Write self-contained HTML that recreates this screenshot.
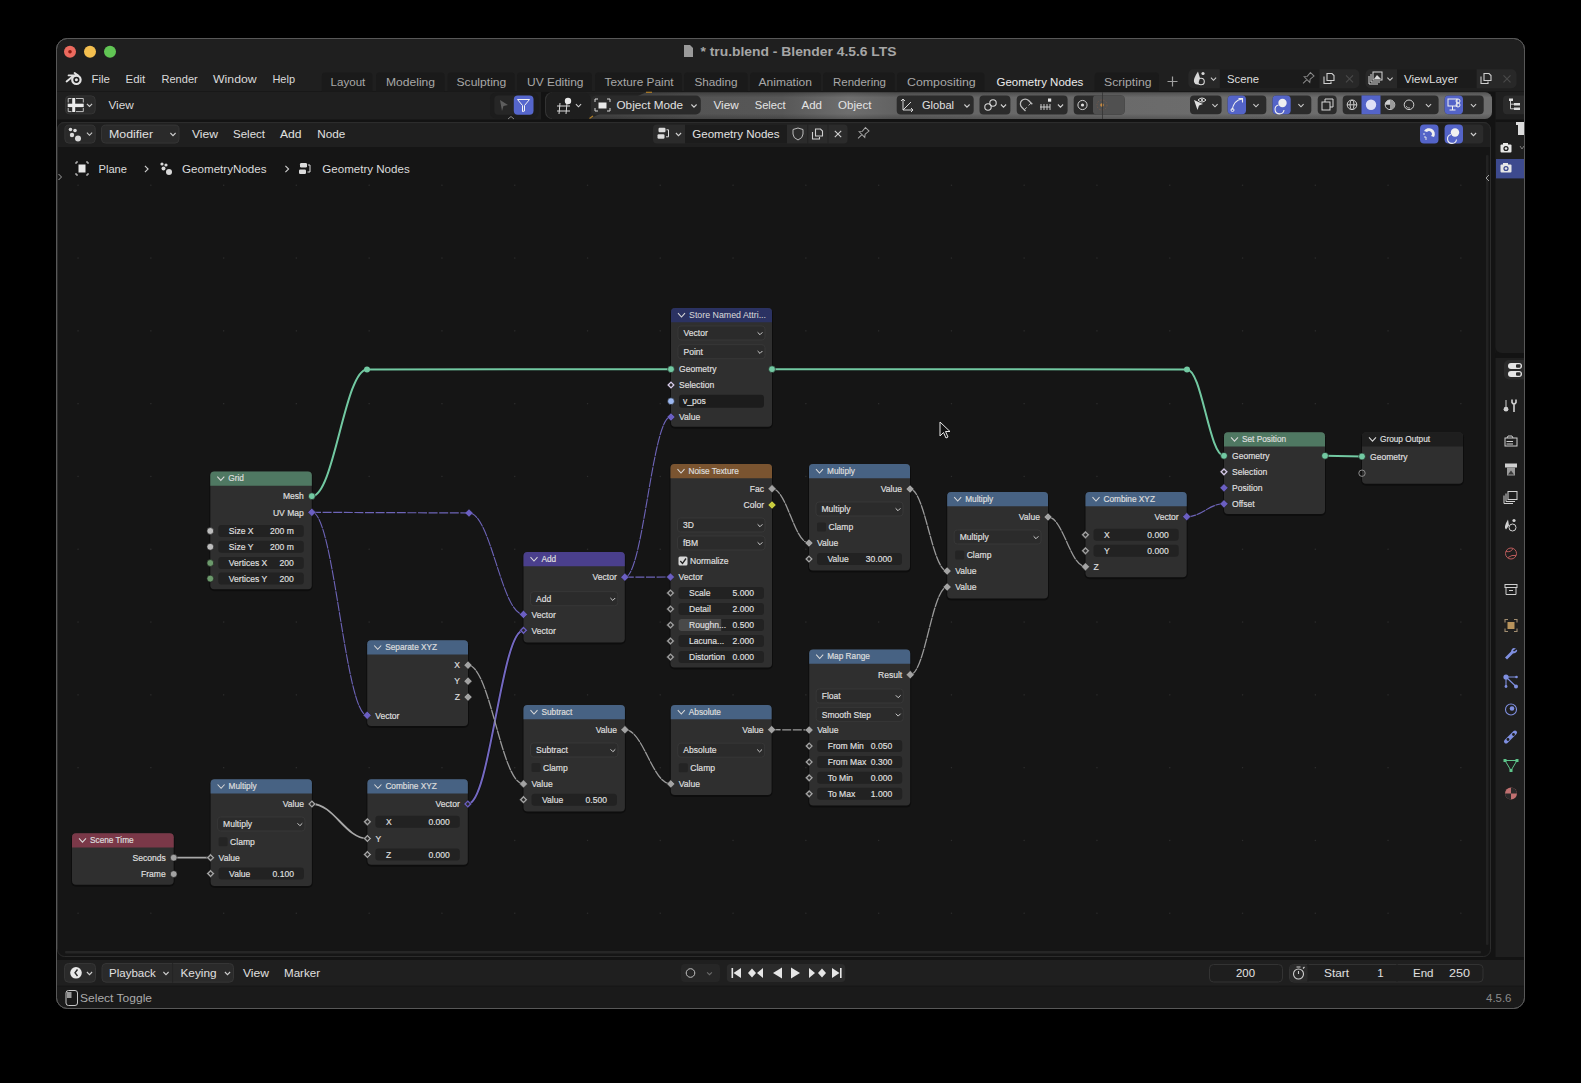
<!DOCTYPE html>
<html><head><meta charset="utf-8"><title>Blender</title>
<style>html,body{margin:0;padding:0;background:#000;width:1581px;height:1083px;overflow:hidden}
svg{display:block;font-family:"Liberation Sans", sans-serif}</style></head>
<body><svg width="1581" height="1083" viewBox="0 0 1581 1083">
<rect x="0" y="0" width="1581" height="1083" rx="0" fill="#000"/>
<rect x="56.5" y="38.5" width="1468" height="970" rx="11" fill="#131313" stroke="#585858" stroke-width="1"/>
<clipPath id="winclip"><rect x="57" y="39" width="1467" height="969" rx="10.5"/></clipPath><g clip-path="url(#winclip)">
<path d="M57 49 Q57 39 67 39 L1514 39 Q1524 39 1524 49 L1524 91.6 L57 91.6 Z" fill="#1f1f1f"/>
<circle cx="70" cy="51.8" r="6" fill="#ec6a5e"/>
<circle cx="90" cy="51.8" r="6" fill="#f4bf4f"/>
<circle cx="110" cy="51.8" r="6" fill="#61c554"/>
<circle cx="70" cy="51.8" r="1.8" fill="#8c1a10"/>
<path d="M684 45 L690 45 L693 48 L693 57 L684 57 Z" fill="#9a9a9a"/>
<text x="700.5" y="55.8" font-size="12.5" fill="#a6a6a6" font-weight="bold" textLength="196" lengthAdjust="spacingAndGlyphs">* tru.blend - Blender 4.5.6 LTS</text>
<g fill="none" stroke="#e2e2e2" stroke-linecap="round"><circle cx="76.4" cy="79.8" r="4.2" stroke-width="2.2"/><path d="M74.6 73 L78.2 75.6 M68.6 75.4 L76.5 75.2 M66.6 81.4 L72.6 76.4" stroke-width="1.9"/></g><circle cx="76.4" cy="79.8" r="1.5" fill="#e2e2e2"/>
<text x="91.4" y="83.4" font-size="11.8" fill="#dadada" textLength="18.6" lengthAdjust="spacingAndGlyphs">File</text>
<text x="125.6" y="83.4" font-size="11.8" fill="#dadada" textLength="19.7" lengthAdjust="spacingAndGlyphs">Edit</text>
<text x="161.5" y="83.4" font-size="11.8" fill="#dadada" textLength="36.2" lengthAdjust="spacingAndGlyphs">Render</text>
<text x="213.0" y="83.4" font-size="11.8" fill="#dadada" textLength="43.7" lengthAdjust="spacingAndGlyphs">Window</text>
<text x="272.4" y="83.4" font-size="11.8" fill="#dadada" textLength="22.6" lengthAdjust="spacingAndGlyphs">Help</text>
<path d="M321.8 91.6 L321.8 76 Q321.8 72.6 325.2 72.6 L369.1 72.6 Q372.5 72.6 372.5 76 L372.5 91.6 Z" fill="#1a1a1a"/>
<text x="330.6" y="86.4" font-size="11.5" fill="#a8a8a8" textLength="34.7" lengthAdjust="spacingAndGlyphs">Layout</text>
<path d="M376 91.6 L376 76 Q376 72.6 379.4 72.6 L441.20000000000005 72.6 Q444.6 72.6 444.6 76 L444.6 91.6 Z" fill="#1a1a1a"/>
<text x="386.0" y="86.4" font-size="11.5" fill="#a8a8a8" textLength="49" lengthAdjust="spacingAndGlyphs">Modeling</text>
<path d="M447.6 91.6 L447.6 76 Q447.6 72.6 451.0 72.6 L511.30000000000007 72.6 Q514.7 72.6 514.7 76 L514.7 91.6 Z" fill="#1a1a1a"/>
<text x="456.5" y="86.4" font-size="11.5" fill="#a8a8a8" textLength="49.8" lengthAdjust="spacingAndGlyphs">Sculpting</text>
<path d="M517 91.6 L517 76 Q517 72.6 520.4 72.6 L588.6 72.6 Q592 72.6 592 76 L592 91.6 Z" fill="#1a1a1a"/>
<text x="527.0" y="86.4" font-size="11.5" fill="#a8a8a8" textLength="56.5" lengthAdjust="spacingAndGlyphs">UV Editing</text>
<path d="M595 91.6 L595 76 Q595 72.6 598.4 72.6 L678.4 72.6 Q681.8 72.6 681.8 76 L681.8 91.6 Z" fill="#1a1a1a"/>
<text x="604.5" y="86.4" font-size="11.5" fill="#a8a8a8" textLength="69" lengthAdjust="spacingAndGlyphs">Texture Paint</text>
<path d="M684 91.6 L684 76 Q684 72.6 687.4 72.6 L744.2 72.6 Q747.6 72.6 747.6 76 L747.6 91.6 Z" fill="#1a1a1a"/>
<text x="694.4" y="86.4" font-size="11.5" fill="#a8a8a8" textLength="43.1" lengthAdjust="spacingAndGlyphs">Shading</text>
<path d="M750 91.6 L750 76 Q750 72.6 753.4 72.6 L817.6 72.6 Q821 72.6 821 76 L821 91.6 Z" fill="#1a1a1a"/>
<text x="758.5" y="86.4" font-size="11.5" fill="#a8a8a8" textLength="53.5" lengthAdjust="spacingAndGlyphs">Animation</text>
<path d="M823 91.6 L823 76 Q823 72.6 826.4 72.6 L891.3000000000001 72.6 Q894.7 72.6 894.7 76 L894.7 91.6 Z" fill="#1a1a1a"/>
<text x="833.0" y="86.4" font-size="11.5" fill="#a8a8a8" textLength="53" lengthAdjust="spacingAndGlyphs">Rendering</text>
<path d="M897 91.6 L897 76 Q897 72.6 900.4 72.6 L981.1 72.6 Q984.5 72.6 984.5 76 L984.5 91.6 Z" fill="#1a1a1a"/>
<text x="907.0" y="86.4" font-size="11.5" fill="#a8a8a8" textLength="68.7" lengthAdjust="spacingAndGlyphs">Compositing</text>
<text x="996.5" y="86.4" font-size="11.5" fill="#ececec" textLength="86.8" lengthAdjust="spacingAndGlyphs">Geometry Nodes</text>
<path d="M1094.7 91.6 L1094.7 76 Q1094.7 72.6 1098.1000000000001 72.6 L1155.6 72.6 Q1159 72.6 1159 76 L1159 91.6 Z" fill="#1a1a1a"/>
<text x="1104.0" y="86.4" font-size="11.5" fill="#a8a8a8" textLength="47.6" lengthAdjust="spacingAndGlyphs">Scripting</text>
<path d="M1167.5 81.5 L1177.5 81.5 M1172.5 76.5 L1172.5 86.5" stroke="#a0a0a0" stroke-width="1.2"/>
<rect x="1188.4" y="69.3" width="170.89999999999986" height="19.0" rx="5" fill="#282828"/>
<rect x="1219.8" y="69.3" width="99.70000000000005" height="19.0" rx="0" fill="#1b1b1b"/>
<text x="1227.0" y="82.9" font-size="11.5" fill="#dedede" textLength="32" lengthAdjust="spacingAndGlyphs">Scene</text>
<rect x="1365.5" y="69.3" width="151.0" height="19.0" rx="5" fill="#282828"/>
<rect x="1397" y="69.3" width="79.59999999999991" height="19.0" rx="0" fill="#1b1b1b"/>
<text x="1404.0" y="82.9" font-size="11.5" fill="#dedede" textLength="54" lengthAdjust="spacingAndGlyphs">ViewLayer</text>
<path d="M1198 71.5 Q1193 79 1194 82 Q1195 85 1198 84.5 L1200 78 Z" fill="#d8d8d8"/><circle cx="1201" cy="81.5" r="3.3" fill="none" stroke="#d8d8d8" stroke-width="1.1"/><circle cx="1203" cy="73.5" r="1.6" fill="#d8d8d8"/>
<path d="M1210.9 77.7 L1213.5 80.3 L1216.1 77.7" fill="none" stroke="#cfcfcf" stroke-width="1.1"/>
<g transform="translate(1308,78.5) rotate(45)" fill="none" stroke="#8a8a8a" stroke-width="1"><path d="M-2.5 -6 L2.5 -6 L2 -1 L4 1.5 L-4 1.5 L-2 -1 Z M0 1.5 L0 7"/></g>
<path d="M1324 76.5 L1324 83.5 L1331 83.5 L1331 81.5" fill="none" stroke="#cfcfcf" stroke-width="1.1"/><path d="M1327 73.5 L1332 73.5 L1334 75.5 L1334 80.5 L1327 80.5 Z" fill="none" stroke="#cfcfcf" stroke-width="1.1"/>
<path d="M1346.0 75.3 L1353.0 82.3 M1353.0 75.3 L1346.0 82.3" stroke="#4a4a4a" stroke-width="1.1"/>
<g fill="none" stroke="#d8d8d8" stroke-width="1"><rect x="1373" y="72" width="9" height="8"/><path d="M1371 74 L1371 82 L1380 82 M1369 76 L1369 84 L1378 84"/></g><path d="M1374 79 L1377 75 L1381 79 Z" fill="#d8d8d8"/>
<path d="M1387.4 77.7 L1390.0 80.3 L1392.6 77.7" fill="none" stroke="#cfcfcf" stroke-width="1.1"/>
<path d="M1481 76.5 L1481 83.5 L1488 83.5 L1488 81.5" fill="none" stroke="#cfcfcf" stroke-width="1.1"/><path d="M1484 73.5 L1489 73.5 L1491 75.5 L1491 80.5 L1484 80.5 Z" fill="none" stroke="#cfcfcf" stroke-width="1.1"/>
<path d="M1503.5 75.3 L1510.5 82.3 M1510.5 75.3 L1503.5 82.3" stroke="#4a4a4a" stroke-width="1.1"/>
<rect x="57" y="92" width="484" height="27.5" rx="0" fill="#1f1f1f"/>
<rect x="65.4" y="95.9" width="29.8" height="18" rx="4" fill="#2a2a2a" stroke="#353535" stroke-width="1"/>
<g fill="none" stroke="#d0d0d0" stroke-width="0.9"><path d="M68.2 102.5 L68.2 98.5 L71.5 98.5 M76 98.5 L83.3 98.5 L83.3 102.5 M68.2 108 L68.2 111.6 L71.5 111.6 M76 111.6 L83.3 111.6 L83.3 108"/></g><g fill="#ececec"><rect x="72.2" y="98" width="3" height="14"/><rect x="67.7" y="103.7" width="16" height="3.4"/></g>
<path d="M86.9 103.9 L89.5 106.5 L92.1 103.9" fill="none" stroke="#cfcfcf" stroke-width="1.1"/>
<text x="108.4" y="109.1" font-size="11.5" fill="#dadada" textLength="25.3" lengthAdjust="spacingAndGlyphs">View</text>
<rect x="490" y="92.6" width="48.60000000000002" height="25.80000000000001" rx="6" fill="#1c1c1c"/>
<rect x="494.3" y="95.6" width="39.19999999999999" height="19.200000000000003" rx="4" fill="#262626"/>
<path d="M500 100 L508 105 L503.5 106 L502 111 Z" fill="#5e5e5e"/>
<rect x="513.8" y="95.6" width="19.700000000000045" height="19.200000000000003" rx="4" fill="#5566cc"/>
<path d="M517.5 99.5 L529.5 99.5 L524.5 105.5 L524.5 111 L522.5 111.5 L522.5 105.5 Z" fill="none" stroke="#f4f4f4" stroke-width="1"/>
<path d="M508 119 L511 116.5 L514 119" fill="none" stroke="#8a8a8a" stroke-width="1"/>
<defs><linearGradient id="vpg" x1="0" y1="0" x2="1" y2="0"><stop offset="0" stop-color="#3a3a3a"/><stop offset="0.15" stop-color="#545454"/><stop offset="0.25" stop-color="#575757"/><stop offset="0.32" stop-color="#6e6e6e"/><stop offset="0.37" stop-color="#626262"/><stop offset="0.5" stop-color="#686868"/><stop offset="0.7" stop-color="#6c6c6c"/><stop offset="1" stop-color="#6e6e6e"/></linearGradient><linearGradient id="vpv" x1="0" y1="0" x2="0" y2="1"><stop offset="0" stop-color="#000" stop-opacity="0.25"/><stop offset="0.2" stop-color="#000" stop-opacity="0"/><stop offset="0.8" stop-color="#000" stop-opacity="0"/><stop offset="1" stop-color="#000" stop-opacity="0.2"/></linearGradient></defs>
<rect x="545.2" y="92.2" width="946.8" height="26.8" rx="7" fill="url(#vpg)"/>
<path d="M552 92.2 L646 92.2 L589 119 L552 119 Z" fill="#262626"/>
<path d="M646 92.4 L652 92.4 M589.5 118.6 L593 116" stroke="#c8902e" stroke-width="1.2"/>
<rect x="545.2" y="92.2" width="946.8" height="26.8" rx="7" fill="url(#vpv)"/>
<rect x="546" y="92.6" width="45" height="26.0" rx="7" fill="#1e1e1e"/>
<g stroke="#d8d8d8" stroke-width="1" fill="none"><path d="M557 106 L570 106 M557 111 L570 111 M560 103 L559 114 M567 103 L566 114"/></g><circle cx="568" cy="101" r="3.2" fill="#e8e8e8"/>
<path d="M575.9 104.2 L578.5 106.8 L581.1 104.2" fill="none" stroke="#cfcfcf" stroke-width="1.1"/>
<rect x="591" y="95.5" width="109.79999999999995" height="19.0" rx="5" fill="#2a2a2a"/>
<g fill="none" stroke="#d8d8d8" stroke-width="1"><path d="M595 99 L598 99 M595 99 L595 102 M607 99 L610 99 M610 99 L610 102 M595 111 L598 111 M595 111 L595 108 M607 111 L610 111 M610 111 L610 108"/></g><rect x="598.5" y="102.5" width="8" height="6" fill="#e8e8e8"/>
<text x="616.5" y="109.3" font-size="11.5" fill="#e0e0e0" textLength="66.5" lengthAdjust="spacingAndGlyphs">Object Mode</text>
<path d="M691.4 104.5 L694.0 107.1 L696.6 104.5" fill="none" stroke="#cfcfcf" stroke-width="1.1"/>
<text x="713.4" y="109.3" font-size="11.5" fill="#e4e4e4" textLength="25.3" lengthAdjust="spacingAndGlyphs">View</text>
<text x="754.7" y="109.3" font-size="11.5" fill="#e4e4e4" textLength="31" lengthAdjust="spacingAndGlyphs">Select</text>
<text x="801.5" y="109.3" font-size="11.5" fill="#e4e4e4" textLength="20.5" lengthAdjust="spacingAndGlyphs">Add</text>
<text x="838.0" y="109.3" font-size="11.5" fill="#e4e4e4" textLength="33.4" lengthAdjust="spacingAndGlyphs">Object</text>
<rect x="896.7" y="95.5" width="77.0" height="19.0" rx="4" fill="#2b2b2b"/>
<g fill="none" stroke="#d8d8d8" stroke-width="1"><path d="M903 99 L903 110 L913 110 M903 99 L901 101 M903 99 L905 101 M913 110 L911 108 M913 110 L911 112 M903 110 L911 102"/></g>
<text x="922.0" y="109.3" font-size="11.5" fill="#e0e0e0" textLength="32" lengthAdjust="spacingAndGlyphs">Global</text>
<path d="M964.4 104.5 L967.0 107.1 L969.6 104.5" fill="none" stroke="#cfcfcf" stroke-width="1.1"/>
<rect x="979.5" y="95.5" width="30.899999999999977" height="19.0" rx="4" fill="#2b2b2b"/>
<g fill="none" stroke="#d8d8d8" stroke-width="1.1"><circle cx="988" cy="107" r="3.2"/><circle cx="993" cy="103" r="3.2"/></g>
<path d="M1000.9 104.5 L1003.5 107.1 L1006.1 104.5" fill="none" stroke="#cfcfcf" stroke-width="1.1"/>
<rect x="1016.7" y="95.5" width="50.899999999999864" height="19.0" rx="4" fill="#2b2b2b"/>
<path d="M1025.5 111 L1021.8 107.3 A4.8 4.8 0 0 1 1028.6 100.5 L1032.3 104.2" fill="none" stroke="#bcbcbc" stroke-width="1.3"/><path d="M1024.3 109.8 L1026.8 107.3 M1031.1 103 L1028.6 105.5" stroke="#bcbcbc" stroke-width="1"/>
<g stroke="#d8d8d8" stroke-width="0.9"><path d="M1040 107 L1050 107 M1041 104 L1041 110 M1044 104 L1044 110 M1047 104 L1047 110 M1050 104 L1050 110"/></g><rect x="1048" y="98.5" width="3.2" height="3.2" fill="#e8e8e8"/>
<path d="M1057.9 104.5 L1060.5 107.1 L1063.1 104.5" fill="none" stroke="#cfcfcf" stroke-width="1.1"/>
<rect x="1073.7" y="95.5" width="50.899999999999864" height="19.0" rx="4" fill="#2b2b2b"/>
<circle cx="1082.5" cy="105" r="4.6" fill="none" stroke="#d0d0d0" stroke-width="1"/><circle cx="1082.5" cy="105" r="1.6" fill="#e0e0e0"/>
<rect x="1093" y="95.4" width="31.6" height="18.8" rx="3" fill="#505050"/>
<circle cx="1102" cy="105" r="5" fill="none" stroke="#7a5a4a" stroke-width="0.8" stroke-dasharray="1.5 1.5"/><circle cx="1102" cy="105" r="1.8" fill="#c98a40"/>
<path d="M1102.5 92 L1102.5 119" stroke="#333" stroke-width="0.8"/>
<rect x="1190" y="95.4" width="31.59999999999991" height="18.799999999999997" rx="4" fill="#2b2b2b"/>
<path d="M1194 100 L1203 104 L1199 105.5 L1197.5 110 Z" fill="#e0e0e0"/><path d="M1198 100 Q1202 96 1206 100 Q1202 104 1198 100 Z" fill="none" stroke="#e0e0e0" stroke-width="1"/><circle cx="1202" cy="100" r="1.1" fill="#e0e0e0"/>
<path d="M1212.4 104.2 L1215.0 106.8 L1217.6 104.2" fill="none" stroke="#cfcfcf" stroke-width="1.1"/>
<rect x="1227.6" y="95.4" width="38.700000000000045" height="18.799999999999997" rx="4" fill="#2b2b2b"/>
<rect x="1227.6" y="95.4" width="18.40000000000009" height="18.799999999999997" rx="4" fill="#5464c8"/>
<path d="M1232 110 Q1234 100 1242 99 M1238.5 98.5 L1242.5 98.5 L1242.5 102.5" fill="none" stroke="#f0f0f0" stroke-width="1.1"/><circle cx="1232.5" cy="110" r="1.5" fill="none" stroke="#f0f0f0" stroke-width="1"/>
<path d="M1253.4 104.2 L1256.0 106.8 L1258.6 104.2" fill="none" stroke="#cfcfcf" stroke-width="1.1"/>
<rect x="1272.5" y="95.4" width="38.799999999999955" height="18.799999999999997" rx="4" fill="#2b2b2b"/>
<rect x="1272.5" y="95.4" width="18.200000000000045" height="18.799999999999997" rx="4" fill="#5464c8"/>
<circle cx="1282.5" cy="103" r="4.2" fill="#f0f0f0"/><path d="M1278.5 105 A4.5 4.5 0 1 0 1284 110" fill="none" stroke="#f0f0f0" stroke-width="1.1"/>
<path d="M1298.4 104.2 L1301.0 106.8 L1303.6 104.2" fill="none" stroke="#cfcfcf" stroke-width="1.1"/>
<rect x="1317.7" y="95.4" width="19.0" height="18.799999999999997" rx="4" fill="#2b2b2b"/>
<g fill="none" stroke="#d8d8d8" stroke-width="1"><rect x="1322" y="102" width="8" height="8"/><path d="M1325 102 L1325 99 L1333 99 L1333 107 L1330 107"/></g>
<rect x="1342.7" y="95.4" width="95.89999999999986" height="18.799999999999997" rx="4" fill="#2b2b2b"/>
<g fill="none" stroke="#d0d0d0" stroke-width="1"><circle cx="1352" cy="104.8" r="4.8"/><ellipse cx="1352" cy="104.8" rx="2" ry="4.8"/><path d="M1347.2 104.8 L1356.8 104.8"/></g>
<rect x="1361.5" y="95.4" width="19" height="18.8" rx="0" fill="#5464c8"/>
<circle cx="1371" cy="104.8" r="5.2" fill="#dfe0f6"/>
<circle cx="1390" cy="104.8" r="4.8" fill="none" stroke="#d0d0d0" stroke-width="1"/><path d="M1390 100 A4.8 4.8 0 0 1 1390 109.6 Z" fill="#9a9a9a"/><path d="M1390 104.8 L1390 100 A4.8 4.8 0 0 0 1385.2 104.8 Z" fill="#d0d0d0"/>
<circle cx="1409" cy="104.8" r="4.8" fill="none" stroke="#d0d0d0" stroke-width="1"/><path d="M1406 106 A3.5 3.5 0 0 0 1410 108" fill="none" stroke="#d0d0d0" stroke-width="0.8"/>
<path d="M1425.9 104.2 L1428.5 106.8 L1431.1 104.2" fill="none" stroke="#cfcfcf" stroke-width="1.1"/>
<rect x="1444.6" y="95.4" width="39.100000000000136" height="18.799999999999997" rx="4" fill="#2b2b2b"/>
<rect x="1444.6" y="95.4" width="18.40000000000009" height="18.799999999999997" rx="4" fill="#5464c8"/>
<g fill="none" stroke="#f0f0f0" stroke-width="1"><rect x="1448" y="99" width="9" height="7"/><path d="M1452.5 106 L1452.5 110 M1449.5 110 L1455.5 110"/><circle cx="1458" cy="101" r="2"/><circle cx="1458" cy="105" r="2"/></g>
<path d="M1470.9 104.2 L1473.5 106.8 L1476.1 104.2" fill="none" stroke="#cfcfcf" stroke-width="1.1"/>
<rect x="1495.5" y="92" width="28.5" height="261" rx="0" fill="#1f1f1f"/>
<rect x="1503" y="95.4" width="27" height="18.799999999999997" rx="4" fill="#2b2b2b"/>
<g fill="#dcdcdc"><rect x="1509" y="98.5" width="4" height="2.5"/><rect x="1514" y="103" width="6" height="2.5"/><rect x="1514" y="107.5" width="6" height="2.5"/></g><path d="M1510.5 101 L1510.5 108.8 L1514 108.8 M1510.5 104.2 L1514 104.2" fill="none" stroke="#dcdcdc" stroke-width="0.9"/>
<rect x="1495.5" y="119.5" width="28.5" height="238.5" rx="0" fill="#131313"/>
<path d="M1495.5 122 L1524 122 L1524 353 L1502 353 Q1495.5 353 1495.5 346.5 Z" fill="#1e1e1e"/>
<rect x="1518" y="122" width="6" height="13" fill="#dcdcdc"/><rect x="1516" y="122" width="8" height="3" fill="#dcdcdc"/>
<rect x="1496" y="159" width="28" height="19.4" rx="0" fill="#3d4a8e"/>
<g><rect x="1500.5" y="144.5" width="11" height="8" rx="1" fill="#e6e6e6"/><rect x="1503" y="143.0" width="5" height="2" fill="#e6e6e6"/><circle cx="1506" cy="148.5" r="2.6" fill="#1a1a1a"/><circle cx="1506" cy="148.5" r="1.3" fill="#e6e6e6"/></g>
<g><rect x="1500.5" y="164.5" width="11" height="8" rx="1" fill="#e6e6e6"/><rect x="1503" y="163.0" width="5" height="2" fill="#e6e6e6"/><circle cx="1506" cy="168.5" r="2.6" fill="#3d4a8e"/><circle cx="1506" cy="168.5" r="1.3" fill="#e6e6e6"/></g>
<path d="M1520 146 L1522 149 L1524 146" stroke="#888" fill="none" stroke-width="0.9"/>
<clipPath id="nedclip"><rect x="57" y="122" width="1434" height="835" rx="7"/></clipPath>
<g clip-path="url(#nedclip)">
<rect x="57" y="122" width="1434" height="835" rx="0" fill="#151515"/>
<rect x="57" y="122" width="1434" height="25" rx="0" fill="#1f1f1f"/>
<path d="M57 122.6 L1491 122.6" stroke="#2a2a2a" stroke-width="1"/>
<g fill="#2c2c2c"><rect x="77.4" y="184.6" width="1.3" height="1.3"/><rect x="150.2" y="184.6" width="1.3" height="1.3"/><rect x="223.0" y="184.6" width="1.3" height="1.3"/><rect x="295.7" y="184.6" width="1.3" height="1.3"/><rect x="368.5" y="184.6" width="1.3" height="1.3"/><rect x="441.3" y="184.6" width="1.3" height="1.3"/><rect x="514.1" y="184.6" width="1.3" height="1.3"/><rect x="586.9" y="184.6" width="1.3" height="1.3"/><rect x="659.6" y="184.6" width="1.3" height="1.3"/><rect x="732.4" y="184.6" width="1.3" height="1.3"/><rect x="805.2" y="184.6" width="1.3" height="1.3"/><rect x="878.0" y="184.6" width="1.3" height="1.3"/><rect x="950.8" y="184.6" width="1.3" height="1.3"/><rect x="1023.5" y="184.6" width="1.3" height="1.3"/><rect x="1096.3" y="184.6" width="1.3" height="1.3"/><rect x="1169.1" y="184.6" width="1.3" height="1.3"/><rect x="1241.9" y="184.6" width="1.3" height="1.3"/><rect x="1314.7" y="184.6" width="1.3" height="1.3"/><rect x="1387.4" y="184.6" width="1.3" height="1.3"/><rect x="1460.2" y="184.6" width="1.3" height="1.3"/><rect x="77.4" y="257.4" width="1.3" height="1.3"/><rect x="150.2" y="257.4" width="1.3" height="1.3"/><rect x="223.0" y="257.4" width="1.3" height="1.3"/><rect x="295.7" y="257.4" width="1.3" height="1.3"/><rect x="368.5" y="257.4" width="1.3" height="1.3"/><rect x="441.3" y="257.4" width="1.3" height="1.3"/><rect x="514.1" y="257.4" width="1.3" height="1.3"/><rect x="586.9" y="257.4" width="1.3" height="1.3"/><rect x="659.6" y="257.4" width="1.3" height="1.3"/><rect x="732.4" y="257.4" width="1.3" height="1.3"/><rect x="805.2" y="257.4" width="1.3" height="1.3"/><rect x="878.0" y="257.4" width="1.3" height="1.3"/><rect x="950.8" y="257.4" width="1.3" height="1.3"/><rect x="1023.5" y="257.4" width="1.3" height="1.3"/><rect x="1096.3" y="257.4" width="1.3" height="1.3"/><rect x="1169.1" y="257.4" width="1.3" height="1.3"/><rect x="1241.9" y="257.4" width="1.3" height="1.3"/><rect x="1314.7" y="257.4" width="1.3" height="1.3"/><rect x="1387.4" y="257.4" width="1.3" height="1.3"/><rect x="1460.2" y="257.4" width="1.3" height="1.3"/><rect x="77.4" y="330.2" width="1.3" height="1.3"/><rect x="150.2" y="330.2" width="1.3" height="1.3"/><rect x="223.0" y="330.2" width="1.3" height="1.3"/><rect x="295.7" y="330.2" width="1.3" height="1.3"/><rect x="368.5" y="330.2" width="1.3" height="1.3"/><rect x="441.3" y="330.2" width="1.3" height="1.3"/><rect x="514.1" y="330.2" width="1.3" height="1.3"/><rect x="586.9" y="330.2" width="1.3" height="1.3"/><rect x="659.6" y="330.2" width="1.3" height="1.3"/><rect x="732.4" y="330.2" width="1.3" height="1.3"/><rect x="805.2" y="330.2" width="1.3" height="1.3"/><rect x="878.0" y="330.2" width="1.3" height="1.3"/><rect x="950.8" y="330.2" width="1.3" height="1.3"/><rect x="1023.5" y="330.2" width="1.3" height="1.3"/><rect x="1096.3" y="330.2" width="1.3" height="1.3"/><rect x="1169.1" y="330.2" width="1.3" height="1.3"/><rect x="1241.9" y="330.2" width="1.3" height="1.3"/><rect x="1314.7" y="330.2" width="1.3" height="1.3"/><rect x="1387.4" y="330.2" width="1.3" height="1.3"/><rect x="1460.2" y="330.2" width="1.3" height="1.3"/><rect x="77.4" y="403.0" width="1.3" height="1.3"/><rect x="150.2" y="403.0" width="1.3" height="1.3"/><rect x="223.0" y="403.0" width="1.3" height="1.3"/><rect x="295.7" y="403.0" width="1.3" height="1.3"/><rect x="368.5" y="403.0" width="1.3" height="1.3"/><rect x="441.3" y="403.0" width="1.3" height="1.3"/><rect x="514.1" y="403.0" width="1.3" height="1.3"/><rect x="586.9" y="403.0" width="1.3" height="1.3"/><rect x="659.6" y="403.0" width="1.3" height="1.3"/><rect x="732.4" y="403.0" width="1.3" height="1.3"/><rect x="805.2" y="403.0" width="1.3" height="1.3"/><rect x="878.0" y="403.0" width="1.3" height="1.3"/><rect x="950.8" y="403.0" width="1.3" height="1.3"/><rect x="1023.5" y="403.0" width="1.3" height="1.3"/><rect x="1096.3" y="403.0" width="1.3" height="1.3"/><rect x="1169.1" y="403.0" width="1.3" height="1.3"/><rect x="1241.9" y="403.0" width="1.3" height="1.3"/><rect x="1314.7" y="403.0" width="1.3" height="1.3"/><rect x="1387.4" y="403.0" width="1.3" height="1.3"/><rect x="1460.2" y="403.0" width="1.3" height="1.3"/><rect x="77.4" y="475.8" width="1.3" height="1.3"/><rect x="150.2" y="475.8" width="1.3" height="1.3"/><rect x="223.0" y="475.8" width="1.3" height="1.3"/><rect x="295.7" y="475.8" width="1.3" height="1.3"/><rect x="368.5" y="475.8" width="1.3" height="1.3"/><rect x="441.3" y="475.8" width="1.3" height="1.3"/><rect x="514.1" y="475.8" width="1.3" height="1.3"/><rect x="586.9" y="475.8" width="1.3" height="1.3"/><rect x="659.6" y="475.8" width="1.3" height="1.3"/><rect x="732.4" y="475.8" width="1.3" height="1.3"/><rect x="805.2" y="475.8" width="1.3" height="1.3"/><rect x="878.0" y="475.8" width="1.3" height="1.3"/><rect x="950.8" y="475.8" width="1.3" height="1.3"/><rect x="1023.5" y="475.8" width="1.3" height="1.3"/><rect x="1096.3" y="475.8" width="1.3" height="1.3"/><rect x="1169.1" y="475.8" width="1.3" height="1.3"/><rect x="1241.9" y="475.8" width="1.3" height="1.3"/><rect x="1314.7" y="475.8" width="1.3" height="1.3"/><rect x="1387.4" y="475.8" width="1.3" height="1.3"/><rect x="1460.2" y="475.8" width="1.3" height="1.3"/><rect x="77.4" y="548.6" width="1.3" height="1.3"/><rect x="150.2" y="548.6" width="1.3" height="1.3"/><rect x="223.0" y="548.6" width="1.3" height="1.3"/><rect x="295.7" y="548.6" width="1.3" height="1.3"/><rect x="368.5" y="548.6" width="1.3" height="1.3"/><rect x="441.3" y="548.6" width="1.3" height="1.3"/><rect x="514.1" y="548.6" width="1.3" height="1.3"/><rect x="586.9" y="548.6" width="1.3" height="1.3"/><rect x="659.6" y="548.6" width="1.3" height="1.3"/><rect x="732.4" y="548.6" width="1.3" height="1.3"/><rect x="805.2" y="548.6" width="1.3" height="1.3"/><rect x="878.0" y="548.6" width="1.3" height="1.3"/><rect x="950.8" y="548.6" width="1.3" height="1.3"/><rect x="1023.5" y="548.6" width="1.3" height="1.3"/><rect x="1096.3" y="548.6" width="1.3" height="1.3"/><rect x="1169.1" y="548.6" width="1.3" height="1.3"/><rect x="1241.9" y="548.6" width="1.3" height="1.3"/><rect x="1314.7" y="548.6" width="1.3" height="1.3"/><rect x="1387.4" y="548.6" width="1.3" height="1.3"/><rect x="1460.2" y="548.6" width="1.3" height="1.3"/><rect x="77.4" y="621.4" width="1.3" height="1.3"/><rect x="150.2" y="621.4" width="1.3" height="1.3"/><rect x="223.0" y="621.4" width="1.3" height="1.3"/><rect x="295.7" y="621.4" width="1.3" height="1.3"/><rect x="368.5" y="621.4" width="1.3" height="1.3"/><rect x="441.3" y="621.4" width="1.3" height="1.3"/><rect x="514.1" y="621.4" width="1.3" height="1.3"/><rect x="586.9" y="621.4" width="1.3" height="1.3"/><rect x="659.6" y="621.4" width="1.3" height="1.3"/><rect x="732.4" y="621.4" width="1.3" height="1.3"/><rect x="805.2" y="621.4" width="1.3" height="1.3"/><rect x="878.0" y="621.4" width="1.3" height="1.3"/><rect x="950.8" y="621.4" width="1.3" height="1.3"/><rect x="1023.5" y="621.4" width="1.3" height="1.3"/><rect x="1096.3" y="621.4" width="1.3" height="1.3"/><rect x="1169.1" y="621.4" width="1.3" height="1.3"/><rect x="1241.9" y="621.4" width="1.3" height="1.3"/><rect x="1314.7" y="621.4" width="1.3" height="1.3"/><rect x="1387.4" y="621.4" width="1.3" height="1.3"/><rect x="1460.2" y="621.4" width="1.3" height="1.3"/><rect x="77.4" y="694.2" width="1.3" height="1.3"/><rect x="150.2" y="694.2" width="1.3" height="1.3"/><rect x="223.0" y="694.2" width="1.3" height="1.3"/><rect x="295.7" y="694.2" width="1.3" height="1.3"/><rect x="368.5" y="694.2" width="1.3" height="1.3"/><rect x="441.3" y="694.2" width="1.3" height="1.3"/><rect x="514.1" y="694.2" width="1.3" height="1.3"/><rect x="586.9" y="694.2" width="1.3" height="1.3"/><rect x="659.6" y="694.2" width="1.3" height="1.3"/><rect x="732.4" y="694.2" width="1.3" height="1.3"/><rect x="805.2" y="694.2" width="1.3" height="1.3"/><rect x="878.0" y="694.2" width="1.3" height="1.3"/><rect x="950.8" y="694.2" width="1.3" height="1.3"/><rect x="1023.5" y="694.2" width="1.3" height="1.3"/><rect x="1096.3" y="694.2" width="1.3" height="1.3"/><rect x="1169.1" y="694.2" width="1.3" height="1.3"/><rect x="1241.9" y="694.2" width="1.3" height="1.3"/><rect x="1314.7" y="694.2" width="1.3" height="1.3"/><rect x="1387.4" y="694.2" width="1.3" height="1.3"/><rect x="1460.2" y="694.2" width="1.3" height="1.3"/><rect x="77.4" y="767.0" width="1.3" height="1.3"/><rect x="150.2" y="767.0" width="1.3" height="1.3"/><rect x="223.0" y="767.0" width="1.3" height="1.3"/><rect x="295.7" y="767.0" width="1.3" height="1.3"/><rect x="368.5" y="767.0" width="1.3" height="1.3"/><rect x="441.3" y="767.0" width="1.3" height="1.3"/><rect x="514.1" y="767.0" width="1.3" height="1.3"/><rect x="586.9" y="767.0" width="1.3" height="1.3"/><rect x="659.6" y="767.0" width="1.3" height="1.3"/><rect x="732.4" y="767.0" width="1.3" height="1.3"/><rect x="805.2" y="767.0" width="1.3" height="1.3"/><rect x="878.0" y="767.0" width="1.3" height="1.3"/><rect x="950.8" y="767.0" width="1.3" height="1.3"/><rect x="1023.5" y="767.0" width="1.3" height="1.3"/><rect x="1096.3" y="767.0" width="1.3" height="1.3"/><rect x="1169.1" y="767.0" width="1.3" height="1.3"/><rect x="1241.9" y="767.0" width="1.3" height="1.3"/><rect x="1314.7" y="767.0" width="1.3" height="1.3"/><rect x="1387.4" y="767.0" width="1.3" height="1.3"/><rect x="1460.2" y="767.0" width="1.3" height="1.3"/><rect x="77.4" y="839.8" width="1.3" height="1.3"/><rect x="150.2" y="839.8" width="1.3" height="1.3"/><rect x="223.0" y="839.8" width="1.3" height="1.3"/><rect x="295.7" y="839.8" width="1.3" height="1.3"/><rect x="368.5" y="839.8" width="1.3" height="1.3"/><rect x="441.3" y="839.8" width="1.3" height="1.3"/><rect x="514.1" y="839.8" width="1.3" height="1.3"/><rect x="586.9" y="839.8" width="1.3" height="1.3"/><rect x="659.6" y="839.8" width="1.3" height="1.3"/><rect x="732.4" y="839.8" width="1.3" height="1.3"/><rect x="805.2" y="839.8" width="1.3" height="1.3"/><rect x="878.0" y="839.8" width="1.3" height="1.3"/><rect x="950.8" y="839.8" width="1.3" height="1.3"/><rect x="1023.5" y="839.8" width="1.3" height="1.3"/><rect x="1096.3" y="839.8" width="1.3" height="1.3"/><rect x="1169.1" y="839.8" width="1.3" height="1.3"/><rect x="1241.9" y="839.8" width="1.3" height="1.3"/><rect x="1314.7" y="839.8" width="1.3" height="1.3"/><rect x="1387.4" y="839.8" width="1.3" height="1.3"/><rect x="1460.2" y="839.8" width="1.3" height="1.3"/><rect x="77.4" y="912.6" width="1.3" height="1.3"/><rect x="150.2" y="912.6" width="1.3" height="1.3"/><rect x="223.0" y="912.6" width="1.3" height="1.3"/><rect x="295.7" y="912.6" width="1.3" height="1.3"/><rect x="368.5" y="912.6" width="1.3" height="1.3"/><rect x="441.3" y="912.6" width="1.3" height="1.3"/><rect x="514.1" y="912.6" width="1.3" height="1.3"/><rect x="586.9" y="912.6" width="1.3" height="1.3"/><rect x="659.6" y="912.6" width="1.3" height="1.3"/><rect x="732.4" y="912.6" width="1.3" height="1.3"/><rect x="805.2" y="912.6" width="1.3" height="1.3"/><rect x="878.0" y="912.6" width="1.3" height="1.3"/><rect x="950.8" y="912.6" width="1.3" height="1.3"/><rect x="1023.5" y="912.6" width="1.3" height="1.3"/><rect x="1096.3" y="912.6" width="1.3" height="1.3"/><rect x="1169.1" y="912.6" width="1.3" height="1.3"/><rect x="1241.9" y="912.6" width="1.3" height="1.3"/><rect x="1314.7" y="912.6" width="1.3" height="1.3"/><rect x="1387.4" y="912.6" width="1.3" height="1.3"/><rect x="1460.2" y="912.6" width="1.3" height="1.3"/></g>
<rect x="65" y="951" width="1416" height="2.5" rx="1" fill="#262626"/>
<rect x="1486" y="155" width="2.5" height="790" rx="1" fill="#222222"/>
</g>
<rect x="57.5" y="122.5" width="1433" height="834" rx="7" fill="none" stroke="#2c2c2c" stroke-width="1"/>
<rect x="64.9" y="125.1" width="30.3" height="18" rx="4" fill="#2a2a2a" stroke="#353535" stroke-width="1"/>
<g fill="#d8d8d8"><circle cx="70.5" cy="129.5" r="1.8"/><circle cx="75" cy="130.5" r="1.8"/><circle cx="72" cy="135" r="2.2"/><circle cx="78" cy="138.5" r="3"/></g>
<path d="M86.9 132.7 L89.5 135.3 L92.1 132.7" fill="none" stroke="#cfcfcf" stroke-width="1.1"/>
<rect x="101.5" y="125.1" width="77.5" height="18" rx="4" fill="#2a2a2a" stroke="#353535" stroke-width="1"/>
<text x="109.0" y="137.7" font-size="11.5" fill="#e0e0e0" textLength="44" lengthAdjust="spacingAndGlyphs">Modifier</text>
<path d="M170.4 133.0 L173.0 135.6 L175.6 133.0" fill="none" stroke="#cfcfcf" stroke-width="1.1"/>
<text x="192.0" y="137.7" font-size="11.5" fill="#e0e0e0" textLength="26" lengthAdjust="spacingAndGlyphs">View</text>
<text x="233.0" y="137.7" font-size="11.5" fill="#e0e0e0" textLength="32" lengthAdjust="spacingAndGlyphs">Select</text>
<text x="280.0" y="137.7" font-size="11.5" fill="#e0e0e0" textLength="21.6" lengthAdjust="spacingAndGlyphs">Add</text>
<text x="317.3" y="137.7" font-size="11.5" fill="#e0e0e0" textLength="28" lengthAdjust="spacingAndGlyphs">Node</text>
<rect x="653" y="124.6" width="194.60000000000002" height="18.900000000000006" rx="4" fill="#2b2b2b"/>
<rect x="685" y="124.6" width="102" height="18.9" rx="0" fill="#1c1c1c"/>
<g fill="#dcdcdc"><rect x="658.5" y="127.80000000000001" width="7" height="4.5" rx="1.2"/><rect x="657.5" y="134.3" width="7" height="4.5" rx="1.2"/></g><path d="M666.5 129.8 L668.5 129.8 L668.5 136.8 L666.0 136.8" fill="none" stroke="#dcdcdc" stroke-width="1"/>
<path d="M675.9 133.0 L678.5 135.6 L681.1 133.0" fill="none" stroke="#cfcfcf" stroke-width="1.1"/>
<text x="692.3" y="137.9" font-size="11.5" fill="#e2e2e2" textLength="87.2" lengthAdjust="spacingAndGlyphs">Geometry Nodes</text>
<path d="M793 129.5 L798 128 L803 129.5 L803 134 Q803 138 798 140 Q793 138 793 134 Z" fill="none" stroke="#bcbcbc" stroke-width="1"/>
<path d="M807.8 124.6 L807.8 143.5 M828 124.6 L828 143.5" stroke="#222" stroke-width="1"/>
<path d="M812.5 132 L812.5 139 L819.5 139 L819.5 137" fill="none" stroke="#cfcfcf" stroke-width="1.1"/><path d="M815.5 129 L820.5 129 L822.5 131 L822.5 136 L815.5 136 Z" fill="none" stroke="#cfcfcf" stroke-width="1.1"/>
<path d="M834.8 130.8 L841.2 137.2 M841.2 130.8 L834.8 137.2" stroke="#d0d0d0" stroke-width="1.1"/>
<g transform="translate(863,133.5) rotate(45)" fill="none" stroke="#a8a8a8" stroke-width="1"><path d="M-2.5 -6 L2.5 -6 L2 -1 L4 1.5 L-4 1.5 L-2 -1 Z M0 1.5 L0 7"/></g>
<rect x="1420" y="124.6" width="18.5" height="18.900000000000006" rx="4" fill="#5464c8"/>
<path d="M1424 131 A5.5 5.5 0 1 1 1434 137 L1431 136 A2.5 2.5 0 1 0 1427 132 Z" fill="#f0f0f0"/><path d="M1424 137 L1426 137 L1426 140 M1423 134 L1425 134" stroke="#f0f0f0" stroke-width="0.9" fill="none"/>
<rect x="1444.6" y="124.6" width="38.700000000000045" height="18.900000000000006" rx="4" fill="#2b2b2b"/>
<rect x="1444.6" y="124.6" width="18.40000000000009" height="18.900000000000006" rx="4" fill="#5464c8"/>
<circle cx="1455" cy="132.5" r="4.2" fill="#f0f0f0"/><path d="M1451 134.5 A4.5 4.5 0 1 0 1456.5 139.5" fill="none" stroke="#f0f0f0" stroke-width="1.1"/>
<path d="M1470.9 133.0 L1473.5 135.6 L1476.1 133.0" fill="none" stroke="#cfcfcf" stroke-width="1.1"/>
<g fill="none" stroke="#d8d8d8" stroke-width="1"><path d="M76 164 L76 162 L78 162 M86 162 L88 162 L88 164 M76 173 L76 175 L78 175 M86 175 L88 175 L88 173"/></g><rect x="78.5" y="164.5" width="7" height="8" fill="#e8e8e8"/>
<text x="98.5" y="173.1" font-size="11.5" fill="#dcdcdc" textLength="28.5" lengthAdjust="spacingAndGlyphs">Plane</text>
<g fill="#d8d8d8"><circle cx="162" cy="164" r="1.6"/><circle cx="166" cy="165" r="1.6"/><circle cx="163.5" cy="168.5" r="2"/><circle cx="169" cy="172" r="3"/></g>
<text x="182.0" y="173.1" font-size="11.5" fill="#dcdcdc" textLength="84.6" lengthAdjust="spacingAndGlyphs">GeometryNodes</text>
<g fill="#dcdcdc"><rect x="300" y="163" width="7" height="4.5" rx="1.2"/><rect x="299" y="169.5" width="7" height="4.5" rx="1.2"/></g><path d="M308 165 L310 165 L310 172 L307.5 172" fill="none" stroke="#dcdcdc" stroke-width="1"/>
<text x="322.3" y="173.1" font-size="11.5" fill="#dcdcdc" textLength="87.4" lengthAdjust="spacingAndGlyphs">Geometry Nodes</text>
<path d="M58.5 174 L61.5 177 L58.5 180" fill="none" stroke="#a0a0a0" stroke-width="1"/>
<path d="M1489 175 L1486 178 L1489 181" fill="none" stroke="#a0a0a0" stroke-width="1"/>
<path d="M144.9 165.8 L148.1 169.0 L144.9 172.2" fill="none" stroke="#cfcfcf" stroke-width="1.1"/>
<path d="M285.4 165.8 L288.6 169.0 L285.4 172.2" fill="none" stroke="#cfcfcf" stroke-width="1.1"/>
<g clip-path="url(#nedclip)">
<path d="M312 496.2 C334.0 496.2 345.0 369.4 367 369.4" fill="none" stroke="#72c9a2" stroke-width="2.0" stroke-linecap="round"/>
<path d="M367 369.4 L671 369.2" stroke="#72c9a2" stroke-width="2"/>
<path d="M772 369.2 L1187 369.4" stroke="#72c9a2" stroke-width="2"/>
<path d="M1187 369.4 C1201.8 369.4 1209.2 455.8 1224 455.8" fill="none" stroke="#72c9a2" stroke-width="2.0" stroke-linecap="round"/>
<path d="M1325 455.8 L1362 456.5" stroke="#72c9a2" stroke-width="2"/>
<path d="M312 512.3 L469 513" stroke="#6d64b8" stroke-width="1.2" stroke-dasharray="9 1.6"/>
<path d="M469 513 C490.8 513 501.7 614.4 523.5 614.4" fill="none" stroke="#6d64b8" stroke-width="1.1" stroke-dasharray="9 1.6" stroke-linecap="round"/>
<path d="M312 512.3 C334.08 512.3 345.12 715.3 367.2 715.3" fill="none" stroke="#6d64b8" stroke-width="1.1" stroke-dasharray="9 1.6" stroke-linecap="round"/>
<path d="M624.8 577.2 L670.5 577" stroke="#6d64b8" stroke-width="1.2" stroke-dasharray="9 1.6"/>
<path d="M624.8 577.2 C643.0799999999999 577.2 652.22 417 670.5 417" fill="none" stroke="#6d64b8" stroke-width="1.1" stroke-dasharray="9 1.6" stroke-linecap="round"/>
<path d="M467.8 804 C490.08 804 501.22 630.3 523.5 630.3" fill="none" stroke="#0c0c0c" stroke-width="3.2" stroke-linecap="round"/>
<path d="M467.8 804 C490.08 804 501.22 630.3 523.5 630.3" fill="none" stroke="#7469c2" stroke-width="2.0" stroke-linecap="round"/>
<path d="M1186.7 516.7 C1201.6200000000001 516.7 1209.08 503.8 1224 503.8" fill="none" stroke="#6d64b8" stroke-width="1.1" stroke-dasharray="9 1.6" stroke-linecap="round"/>
<path d="M468 665.2 C490.2 665.2 501.3 783.9 523.5 783.9" fill="none" stroke="#9a9a9a" stroke-width="1.3" stroke-dasharray="9 1.6" stroke-linecap="round"/>
<path d="M624.9 729.7 C643.26 729.7 652.4399999999999 783.9 670.8 783.9" fill="none" stroke="#9a9a9a" stroke-width="1.3" stroke-dasharray="9 1.6" stroke-linecap="round"/>
<path d="M771.6 729.7 L809.2 730" stroke="#9a9a9a" stroke-width="1.3" stroke-dasharray="9 1.6"/>
<path d="M772 488.7 C786.8 488.7 794.2 543 809 543" fill="none" stroke="#9a9a9a" stroke-width="1.3" stroke-dasharray="9 1.6" stroke-linecap="round"/>
<path d="M910 489 C924.88 489 932.32 571 947.2 571" fill="none" stroke="#9a9a9a" stroke-width="1.3" stroke-dasharray="9 1.6" stroke-linecap="round"/>
<path d="M910.2 674.7 C925.0 674.7 932.4000000000001 587 947.2 587" fill="none" stroke="#9a9a9a" stroke-width="1.3" stroke-dasharray="9 1.6" stroke-linecap="round"/>
<path d="M1048 517 C1063.0 517 1070.5 566.8 1085.5 566.8" fill="none" stroke="#9a9a9a" stroke-width="1.3" stroke-dasharray="9 1.6" stroke-linecap="round"/>
<path d="M173.7 857.7 L210.6 857.7" stroke="#a8a8a8" stroke-width="1.8"/>
<path d="M311.9 804 C334.09999999999997 804 345.2 838.5 367.4 838.5" fill="none" stroke="#a8a8a8" stroke-width="1.8" stroke-linecap="round"/>
<circle cx="367" cy="369.4" r="3" fill="#72c9a2"/><circle cx="1187" cy="369.4" r="3" fill="#72c9a2"/>
<path d="M469 509.2 L472.8 513 L469 516.8 L465.2 513 Z" fill="#6b5fc2"/>
<rect x="670" y="308" width="103" height="120.69999999999999" rx="5" fill="#000" opacity="0.35"/>
<rect x="671" y="308" width="101" height="118.69999999999999" rx="4" fill="#2f2f2f"/>
<path d="M671 322.3 L671 312 Q671 308 675 308 L768 308 Q772 308 772 312 L772 322.3 Z" fill="#2b3262"/>
<path d="M678.0 313.2 L681.5 317.0 L685.0 313.2" fill="none" stroke="#d8d8d8" stroke-width="1.05"/>
<text x="689.0" y="317.5" font-size="8.9" fill="#dcdcdc" textLength="77" lengthAdjust="spacingAndGlyphs">Store Named Attri...</text>
<rect x="678" y="326" width="87" height="14" rx="3" fill="#2b2b2b" stroke="#3a3a3a" stroke-width="0.8"/>
<text transform="translate(683.5,336.2) scale(0.93,1)" font-size="9.2" fill="#dedede" stroke="#dedede" stroke-width="0.22">Vector</text>
<path d="M757.6 332.3 L760.0 334.7 L762.4 332.3" fill="none" stroke="#cfcfcf" stroke-width="1.0"/>
<rect x="678" y="344.7" width="87" height="14" rx="3" fill="#2b2b2b" stroke="#3a3a3a" stroke-width="0.8"/>
<text transform="translate(683.5,354.9) scale(0.93,1)" font-size="9.2" fill="#dedede" stroke="#dedede" stroke-width="0.22">Point</text>
<path d="M757.6 351.0 L760.0 353.4 L762.4 351.0" fill="none" stroke="#cfcfcf" stroke-width="1.0"/>
<text transform="translate(679.0,372.4) scale(0.93,1)" font-size="9.2" fill="#dedede" stroke="#dedede" stroke-width="0.22">Geometry</text>
<circle cx="671" cy="369.2" r="3.4" fill="#72c9a2" stroke="#181818" stroke-width="0.6"/>
<circle cx="772" cy="369.2" r="3.4" fill="#72c9a2" stroke="#181818" stroke-width="0.6"/>
<text transform="translate(679.0,388.2) scale(0.93,1)" font-size="9.2" fill="#dedede" stroke="#dedede" stroke-width="0.22">Selection</text>
<path d="M671 380.9 L675.1 385 L671 389.1 L666.9 385 Z" fill="#d4c8e6" stroke="#181818" stroke-width="0.5"/><path d="M671 383.1 L672.9 385 L671 386.9 L669.1 385 Z" fill="#2a2a2a"/>
<rect x="679" y="394.7" width="85" height="13" rx="3" fill="#1c1c1c"/>
<text transform="translate(683.0,404.4) scale(0.93,1)" font-size="9.2" fill="#dedede" stroke="#dedede" stroke-width="0.22">v_pos</text>
<circle cx="671" cy="401.2" r="3.4" fill="#9cb8f0" stroke="#181818" stroke-width="0.6"/>
<text transform="translate(679.0,420.2) scale(0.93,1)" font-size="9.2" fill="#dedede" stroke="#dedede" stroke-width="0.22">Value</text>
<path d="M671 412.9 L675.1 417 L671 421.1 L666.9 417 Z" fill="#6b5fc2" stroke="#181818" stroke-width="0.5"/>
<rect x="209.3" y="471.4" width="103.5" height="119.80000000000007" rx="5" fill="#000" opacity="0.35"/>
<rect x="210.3" y="471.4" width="101.5" height="117.80000000000007" rx="4" fill="#2f2f2f"/>
<path d="M210.3 485.7 L210.3 475.4 Q210.3 471.4 214.3 471.4 L307.8 471.4 Q311.8 471.4 311.8 475.4 L311.8 485.7 Z" fill="#4f7862"/>
<path d="M217.3 476.6 L220.8 480.4 L224.3 476.6" fill="none" stroke="#d8d8d8" stroke-width="1.05"/>
<text transform="translate(228.3,480.9) scale(0.93,1)" font-size="8.9" fill="#dcdcdc" stroke="#dcdcdc" stroke-width="0.22">Grid</text>
<text transform="translate(303.8,499.4) scale(0.93,1)" font-size="9.2" fill="#dedede" stroke="#dedede" stroke-width="0.22" text-anchor="end">Mesh</text>
<circle cx="311.8" cy="496.2" r="3.4" fill="#72c9a2" stroke="#181818" stroke-width="0.6"/>
<text transform="translate(303.8,515.5) scale(0.93,1)" font-size="9.2" fill="#dedede" stroke="#dedede" stroke-width="0.22" text-anchor="end">UV Map</text>
<path d="M311.8 508.19999999999993 L315.90000000000003 512.3 L311.8 516.4 L307.7 512.3 Z" fill="#6b5fc2" stroke="#181818" stroke-width="0.5"/>
<rect x="218.3" y="525" width="85.5" height="12" rx="3" fill="#222222"/>
<text transform="translate(228.8,534.2) scale(0.93,1)" font-size="9.2" fill="#dedede" stroke="#dedede" stroke-width="0.22">Size X</text>
<text transform="translate(293.8,534.2) scale(0.93,1)" font-size="9.2" fill="#dedede" stroke="#dedede" stroke-width="0.22" text-anchor="end">200 m</text>
<circle cx="210.3" cy="531" r="3.4" fill="#bdbdbd" stroke="#181818" stroke-width="0.6"/>
<rect x="218.3" y="540.8" width="85.5" height="12" rx="3" fill="#222222"/>
<text transform="translate(228.8,550.0) scale(0.93,1)" font-size="9.2" fill="#dedede" stroke="#dedede" stroke-width="0.22">Size Y</text>
<text transform="translate(293.8,550.0) scale(0.93,1)" font-size="9.2" fill="#dedede" stroke="#dedede" stroke-width="0.22" text-anchor="end">200 m</text>
<circle cx="210.3" cy="546.8" r="3.4" fill="#bdbdbd" stroke="#181818" stroke-width="0.6"/>
<rect x="218.3" y="557" width="85.5" height="12" rx="3" fill="#222222"/>
<text transform="translate(228.8,566.2) scale(0.93,1)" font-size="9.2" fill="#dedede" stroke="#dedede" stroke-width="0.22">Vertices X</text>
<text transform="translate(293.8,566.2) scale(0.93,1)" font-size="9.2" fill="#dedede" stroke="#dedede" stroke-width="0.22" text-anchor="end">200</text>
<circle cx="210.3" cy="563" r="3.4" fill="#6c9a6c" stroke="#181818" stroke-width="0.6"/>
<rect x="218.3" y="572.6" width="85.5" height="12" rx="3" fill="#222222"/>
<text transform="translate(228.8,581.8) scale(0.93,1)" font-size="9.2" fill="#dedede" stroke="#dedede" stroke-width="0.22">Vertices Y</text>
<text transform="translate(293.8,581.8) scale(0.93,1)" font-size="9.2" fill="#dedede" stroke="#dedede" stroke-width="0.22" text-anchor="end">200</text>
<circle cx="210.3" cy="578.6" r="3.4" fill="#6c9a6c" stroke="#181818" stroke-width="0.6"/>
<rect x="669.5" y="464" width="103.5" height="205.5" rx="5" fill="#000" opacity="0.35"/>
<rect x="670.5" y="464" width="101.5" height="203.5" rx="4" fill="#2f2f2f"/>
<path d="M670.5 478.3 L670.5 468 Q670.5 464 674.5 464 L768.0 464 Q772.0 464 772.0 468 L772.0 478.3 Z" fill="#7a5430"/>
<path d="M677.5 469.2 L681.0 473.0 L684.5 469.2" fill="none" stroke="#d8d8d8" stroke-width="1.05"/>
<text transform="translate(688.5,473.5) scale(0.93,1)" font-size="8.9" fill="#dcdcdc" stroke="#dcdcdc" stroke-width="0.22">Noise Texture</text>
<text transform="translate(764.0,491.9) scale(0.93,1)" font-size="9.2" fill="#dedede" stroke="#dedede" stroke-width="0.22" text-anchor="end">Fac</text>
<path d="M772.0 484.59999999999997 L776.1 488.7 L772.0 492.8 L767.9 488.7 Z" fill="#a3a3a3" stroke="#181818" stroke-width="0.5"/>
<text transform="translate(764.0,508.2) scale(0.93,1)" font-size="9.2" fill="#dedede" stroke="#dedede" stroke-width="0.22" text-anchor="end">Color</text>
<path d="M772.0 500.9 L776.1 505 L772.0 509.1 L767.9 505 Z" fill="#c8cc3e" stroke="#181818" stroke-width="0.5"/>
<rect x="677.5" y="518" width="87.5" height="14" rx="3" fill="#2b2b2b" stroke="#3a3a3a" stroke-width="0.8"/>
<text transform="translate(683.0,528.2) scale(0.93,1)" font-size="9.2" fill="#dedede" stroke="#dedede" stroke-width="0.22">3D</text>
<path d="M757.6 524.3 L760.0 526.7 L762.4 524.3" fill="none" stroke="#cfcfcf" stroke-width="1.0"/>
<rect x="677.5" y="536" width="87.5" height="14" rx="3" fill="#2b2b2b" stroke="#3a3a3a" stroke-width="0.8"/>
<text transform="translate(683.0,546.2) scale(0.93,1)" font-size="9.2" fill="#dedede" stroke="#dedede" stroke-width="0.22">fBM</text>
<path d="M757.6 542.3 L760.0 544.7 L762.4 542.3" fill="none" stroke="#cfcfcf" stroke-width="1.0"/>
<rect x="678.5" y="556.5" width="9" height="9" rx="1.5" fill="#d8d8d8"/><path d="M680.3 561 L682.5 563.4 L686.0 558.5" fill="none" stroke="#222" stroke-width="1.3"/>
<text transform="translate(690.0,564.2) scale(0.93,1)" font-size="9.2" fill="#dedede" stroke="#dedede" stroke-width="0.22">Normalize</text>
<text transform="translate(678.5,580.2) scale(0.93,1)" font-size="9.2" fill="#dedede" stroke="#dedede" stroke-width="0.22">Vector</text>
<path d="M670.5 572.9 L674.6 577 L670.5 581.1 L666.4 577 Z" fill="#6b5fc2" stroke="#181818" stroke-width="0.5"/>
<rect x="678.5" y="587" width="85.5" height="12" rx="3" fill="#222222"/>
<text transform="translate(689.0,596.2) scale(0.93,1)" font-size="9.2" fill="#dedede" stroke="#dedede" stroke-width="0.22">Scale</text>
<text transform="translate(754.0,596.2) scale(0.93,1)" font-size="9.2" fill="#dedede" stroke="#dedede" stroke-width="0.22" text-anchor="end">5.000</text>
<path d="M670.5 588.9 L674.6 593 L670.5 597.1 L666.4 593 Z" fill="#a3a3a3" stroke="#181818" stroke-width="0.5"/><path d="M670.5 591.1 L672.4 593 L670.5 594.9 L668.6 593 Z" fill="#2a2a2a"/>
<rect x="678.5" y="603" width="85.5" height="12" rx="3" fill="#222222"/>
<text transform="translate(689.0,612.2) scale(0.93,1)" font-size="9.2" fill="#dedede" stroke="#dedede" stroke-width="0.22">Detail</text>
<text transform="translate(754.0,612.2) scale(0.93,1)" font-size="9.2" fill="#dedede" stroke="#dedede" stroke-width="0.22" text-anchor="end">2.000</text>
<path d="M670.5 604.9 L674.6 609 L670.5 613.1 L666.4 609 Z" fill="#a3a3a3" stroke="#181818" stroke-width="0.5"/><path d="M670.5 607.1 L672.4 609 L670.5 610.9 L668.6 609 Z" fill="#2a2a2a"/>
<rect x="678.5" y="619" width="85.5" height="12" rx="3" fill="#222222"/>
<path d="M721.2 619 L681.5 619 Q678.5 619 678.5 622 L678.5 628 Q678.5 631 681.5 631 L721.2 631 Z" fill="#494949"/>
<text transform="translate(689.0,628.2) scale(0.93,1)" font-size="9.2" fill="#dedede" stroke="#dedede" stroke-width="0.22">Roughn...</text>
<text transform="translate(754.0,628.2) scale(0.93,1)" font-size="9.2" fill="#dedede" stroke="#dedede" stroke-width="0.22" text-anchor="end">0.500</text>
<path d="M670.5 620.9 L674.6 625 L670.5 629.1 L666.4 625 Z" fill="#a3a3a3" stroke="#181818" stroke-width="0.5"/><path d="M670.5 623.1 L672.4 625 L670.5 626.9 L668.6 625 Z" fill="#2a2a2a"/>
<rect x="678.5" y="635" width="85.5" height="12" rx="3" fill="#222222"/>
<text transform="translate(689.0,644.2) scale(0.93,1)" font-size="9.2" fill="#dedede" stroke="#dedede" stroke-width="0.22">Lacuna...</text>
<text transform="translate(754.0,644.2) scale(0.93,1)" font-size="9.2" fill="#dedede" stroke="#dedede" stroke-width="0.22" text-anchor="end">2.000</text>
<path d="M670.5 636.9 L674.6 641 L670.5 645.1 L666.4 641 Z" fill="#a3a3a3" stroke="#181818" stroke-width="0.5"/><path d="M670.5 639.1 L672.4 641 L670.5 642.9 L668.6 641 Z" fill="#2a2a2a"/>
<rect x="678.5" y="651" width="85.5" height="12" rx="3" fill="#222222"/>
<text transform="translate(689.0,660.2) scale(0.93,1)" font-size="9.2" fill="#dedede" stroke="#dedede" stroke-width="0.22">Distortion</text>
<text transform="translate(754.0,660.2) scale(0.93,1)" font-size="9.2" fill="#dedede" stroke="#dedede" stroke-width="0.22" text-anchor="end">0.000</text>
<path d="M670.5 652.9 L674.6 657 L670.5 661.1 L666.4 657 Z" fill="#a3a3a3" stroke="#181818" stroke-width="0.5"/><path d="M670.5 655.1 L672.4 657 L670.5 658.9 L668.6 657 Z" fill="#2a2a2a"/>
<rect x="808" y="464" width="103" height="108.60000000000002" rx="5" fill="#000" opacity="0.35"/>
<rect x="809" y="464" width="101" height="106.60000000000002" rx="4" fill="#2f2f2f"/>
<path d="M809 478.3 L809 468 Q809 464 813 464 L906 464 Q910 464 910 468 L910 478.3 Z" fill="#476283"/>
<path d="M816.0 469.2 L819.5 473.0 L823.0 469.2" fill="none" stroke="#d8d8d8" stroke-width="1.05"/>
<text transform="translate(827.0,473.5) scale(0.93,1)" font-size="8.9" fill="#dcdcdc" stroke="#dcdcdc" stroke-width="0.22">Multiply</text>
<text transform="translate(902.0,492.2) scale(0.93,1)" font-size="9.2" fill="#dedede" stroke="#dedede" stroke-width="0.22" text-anchor="end">Value</text>
<path d="M910 484.9 L914.1 489 L910 493.1 L905.9 489 Z" fill="#a3a3a3" stroke="#181818" stroke-width="0.5"/>
<rect x="816" y="502" width="87" height="14" rx="3" fill="#2b2b2b" stroke="#3a3a3a" stroke-width="0.8"/>
<text transform="translate(821.5,512.2) scale(0.93,1)" font-size="9.2" fill="#dedede" stroke="#dedede" stroke-width="0.22">Multiply</text>
<path d="M895.6 508.3 L898.0 510.7 L900.4 508.3" fill="none" stroke="#cfcfcf" stroke-width="1.0"/>
<rect x="817" y="522.5" width="9" height="9" rx="1.5" fill="#242424"/>
<text transform="translate(828.5,530.2) scale(0.93,1)" font-size="9.2" fill="#dedede" stroke="#dedede" stroke-width="0.22">Clamp</text>
<text transform="translate(817.0,546.2) scale(0.93,1)" font-size="9.2" fill="#dedede" stroke="#dedede" stroke-width="0.22">Value</text>
<path d="M809 538.9 L813.1 543 L809 547.1 L804.9 543 Z" fill="#a3a3a3" stroke="#181818" stroke-width="0.5"/>
<rect x="817" y="553" width="85" height="12" rx="3" fill="#222222"/>
<text transform="translate(827.5,562.2) scale(0.93,1)" font-size="9.2" fill="#dedede" stroke="#dedede" stroke-width="0.22">Value</text>
<text transform="translate(892.0,562.2) scale(0.93,1)" font-size="9.2" fill="#dedede" stroke="#dedede" stroke-width="0.22" text-anchor="end">30.000</text>
<path d="M809 554.9 L813.1 559 L809 563.1 L804.9 559 Z" fill="#a3a3a3" stroke="#181818" stroke-width="0.5"/><path d="M809 557.1 L810.9 559 L809 560.9 L807.1 559 Z" fill="#2a2a2a"/>
<rect x="946.2" y="492" width="102.8" height="108.60000000000002" rx="5" fill="#000" opacity="0.35"/>
<rect x="947.2" y="492" width="100.8" height="106.60000000000002" rx="4" fill="#2f2f2f"/>
<path d="M947.2 506.3 L947.2 496 Q947.2 492 951.2 492 L1044.0 492 Q1048.0 492 1048.0 496 L1048.0 506.3 Z" fill="#476283"/>
<path d="M954.2 497.2 L957.7 501.0 L961.2 497.2" fill="none" stroke="#d8d8d8" stroke-width="1.05"/>
<text transform="translate(965.2,501.5) scale(0.93,1)" font-size="8.9" fill="#dcdcdc" stroke="#dcdcdc" stroke-width="0.22">Multiply</text>
<text transform="translate(1040.0,520.2) scale(0.93,1)" font-size="9.2" fill="#dedede" stroke="#dedede" stroke-width="0.22" text-anchor="end">Value</text>
<path d="M1048.0 512.9 L1052.1 517 L1048.0 521.1 L1043.9 517 Z" fill="#a3a3a3" stroke="#181818" stroke-width="0.5"/>
<rect x="954.2" y="530" width="86.8" height="14" rx="3" fill="#2b2b2b" stroke="#3a3a3a" stroke-width="0.8"/>
<text transform="translate(959.7,540.2) scale(0.93,1)" font-size="9.2" fill="#dedede" stroke="#dedede" stroke-width="0.22">Multiply</text>
<path d="M1033.6 536.3 L1036.0 538.7 L1038.4 536.3" fill="none" stroke="#cfcfcf" stroke-width="1.0"/>
<rect x="955.2" y="550.5" width="9" height="9" rx="1.5" fill="#242424"/>
<text transform="translate(966.7,558.2) scale(0.93,1)" font-size="9.2" fill="#dedede" stroke="#dedede" stroke-width="0.22">Clamp</text>
<text transform="translate(955.2,574.2) scale(0.93,1)" font-size="9.2" fill="#dedede" stroke="#dedede" stroke-width="0.22">Value</text>
<path d="M947.2 566.9 L951.3000000000001 571 L947.2 575.1 L943.1 571 Z" fill="#a3a3a3" stroke="#181818" stroke-width="0.5"/>
<text transform="translate(955.2,590.2) scale(0.93,1)" font-size="9.2" fill="#dedede" stroke="#dedede" stroke-width="0.22">Value</text>
<path d="M947.2 582.9 L951.3000000000001 587 L947.2 591.1 L943.1 587 Z" fill="#a3a3a3" stroke="#181818" stroke-width="0.5"/>
<rect x="1084.5" y="492" width="103.2" height="87.20000000000005" rx="5" fill="#000" opacity="0.35"/>
<rect x="1085.5" y="492" width="101.2" height="85.20000000000005" rx="4" fill="#2f2f2f"/>
<path d="M1085.5 506.3 L1085.5 496 Q1085.5 492 1089.5 492 L1182.7 492 Q1186.7 492 1186.7 496 L1186.7 506.3 Z" fill="#476283"/>
<path d="M1092.5 497.2 L1096.0 501.0 L1099.5 497.2" fill="none" stroke="#d8d8d8" stroke-width="1.05"/>
<text transform="translate(1103.5,501.5) scale(0.93,1)" font-size="8.9" fill="#dcdcdc" stroke="#dcdcdc" stroke-width="0.22">Combine XYZ</text>
<text transform="translate(1178.7,519.9) scale(0.93,1)" font-size="9.2" fill="#dedede" stroke="#dedede" stroke-width="0.22" text-anchor="end">Vector</text>
<path d="M1186.7 512.6 L1190.8 516.7 L1186.7 520.8000000000001 L1182.6000000000001 516.7 Z" fill="#6b5fc2" stroke="#181818" stroke-width="0.5"/>
<rect x="1093.5" y="528.8" width="85.2" height="12" rx="3" fill="#222222"/>
<text transform="translate(1104.0,538.0) scale(0.93,1)" font-size="9.2" fill="#dedede" stroke="#dedede" stroke-width="0.22">X</text>
<text transform="translate(1168.7,538.0) scale(0.93,1)" font-size="9.2" fill="#dedede" stroke="#dedede" stroke-width="0.22" text-anchor="end">0.000</text>
<path d="M1085.5 530.6999999999999 L1089.6 534.8 L1085.5 538.9 L1081.4 534.8 Z" fill="#a3a3a3" stroke="#181818" stroke-width="0.5"/><path d="M1085.5 532.9 L1087.4 534.8 L1085.5 536.6999999999999 L1083.6 534.8 Z" fill="#2a2a2a"/>
<rect x="1093.5" y="544.8" width="85.2" height="12" rx="3" fill="#222222"/>
<text transform="translate(1104.0,554.0) scale(0.93,1)" font-size="9.2" fill="#dedede" stroke="#dedede" stroke-width="0.22">Y</text>
<text transform="translate(1168.7,554.0) scale(0.93,1)" font-size="9.2" fill="#dedede" stroke="#dedede" stroke-width="0.22" text-anchor="end">0.000</text>
<path d="M1085.5 546.6999999999999 L1089.6 550.8 L1085.5 554.9 L1081.4 550.8 Z" fill="#a3a3a3" stroke="#181818" stroke-width="0.5"/><path d="M1085.5 548.9 L1087.4 550.8 L1085.5 552.6999999999999 L1083.6 550.8 Z" fill="#2a2a2a"/>
<text transform="translate(1093.5,570.0) scale(0.93,1)" font-size="9.2" fill="#dedede" stroke="#dedede" stroke-width="0.22">Z</text>
<path d="M1085.5 562.6999999999999 L1089.6 566.8 L1085.5 570.9 L1081.4 566.8 Z" fill="#a3a3a3" stroke="#181818" stroke-width="0.5"/>
<rect x="1223" y="432.2" width="103" height="83.80000000000001" rx="5" fill="#000" opacity="0.35"/>
<rect x="1224" y="432.2" width="101" height="81.80000000000001" rx="4" fill="#2f2f2f"/>
<path d="M1224 446.5 L1224 436.2 Q1224 432.2 1228 432.2 L1321 432.2 Q1325 432.2 1325 436.2 L1325 446.5 Z" fill="#4f7862"/>
<path d="M1231.0 437.4 L1234.5 441.2 L1238.0 437.4" fill="none" stroke="#d8d8d8" stroke-width="1.05"/>
<text transform="translate(1242.0,441.7) scale(0.93,1)" font-size="8.9" fill="#dcdcdc" stroke="#dcdcdc" stroke-width="0.22">Set Position</text>
<text transform="translate(1232.0,459.0) scale(0.93,1)" font-size="9.2" fill="#dedede" stroke="#dedede" stroke-width="0.22">Geometry</text>
<circle cx="1224" cy="455.8" r="3.4" fill="#72c9a2" stroke="#181818" stroke-width="0.6"/>
<circle cx="1325" cy="455.8" r="3.4" fill="#72c9a2" stroke="#181818" stroke-width="0.6"/>
<text transform="translate(1232.0,475.0) scale(0.93,1)" font-size="9.2" fill="#dedede" stroke="#dedede" stroke-width="0.22">Selection</text>
<path d="M1224 467.7 L1228.1 471.8 L1224 475.90000000000003 L1219.9 471.8 Z" fill="#d4c8e6" stroke="#181818" stroke-width="0.5"/><path d="M1224 469.90000000000003 L1225.9 471.8 L1224 473.7 L1222.1 471.8 Z" fill="#2a2a2a"/>
<text transform="translate(1232.0,491.0) scale(0.93,1)" font-size="9.2" fill="#dedede" stroke="#dedede" stroke-width="0.22">Position</text>
<path d="M1224 483.7 L1228.1 487.8 L1224 491.90000000000003 L1219.9 487.8 Z" fill="#6b5fc2" stroke="#181818" stroke-width="0.5"/>
<text transform="translate(1232.0,507.0) scale(0.93,1)" font-size="9.2" fill="#dedede" stroke="#dedede" stroke-width="0.22">Offset</text>
<path d="M1224 499.7 L1228.1 503.8 L1224 507.90000000000003 L1219.9 503.8 Z" fill="#6b5fc2" stroke="#181818" stroke-width="0.5"/>
<rect x="1361" y="432.2" width="103" height="53.5" rx="5" fill="#000" opacity="0.35"/>
<rect x="1362" y="432.2" width="101" height="51.5" rx="4" fill="#2f2f2f"/>
<path d="M1362 446.5 L1362 436.2 Q1362 432.2 1366 432.2 L1459 432.2 Q1463 432.2 1463 436.2 L1463 446.5 Z" fill="#1e1e1e"/>
<path d="M1369.0 437.4 L1372.5 441.2 L1376.0 437.4" fill="none" stroke="#d8d8d8" stroke-width="1.05"/>
<text transform="translate(1380.0,441.7) scale(0.93,1)" font-size="8.9" fill="#dcdcdc" stroke="#dcdcdc" stroke-width="0.22">Group Output</text>
<text transform="translate(1370.0,459.7) scale(0.93,1)" font-size="9.2" fill="#dedede" stroke="#dedede" stroke-width="0.22">Geometry</text>
<circle cx="1362" cy="456.5" r="3.4" fill="#72c9a2" stroke="#181818" stroke-width="0.6"/>
<circle cx="1362" cy="473.2" r="3.2" fill="none" stroke="#8a8a8a" stroke-width="1"/>
<rect x="522.5" y="552" width="103.3" height="92.39999999999998" rx="5" fill="#000" opacity="0.35"/>
<rect x="523.5" y="552" width="101.3" height="90.39999999999998" rx="4" fill="#2f2f2f"/>
<path d="M523.5 566.3 L523.5 556 Q523.5 552 527.5 552 L620.8 552 Q624.8 552 624.8 556 L624.8 566.3 Z" fill="#4a3f8c"/>
<path d="M530.5 557.2 L534.0 561.0 L537.5 557.2" fill="none" stroke="#d8d8d8" stroke-width="1.05"/>
<text transform="translate(541.5,561.5) scale(0.93,1)" font-size="8.9" fill="#dcdcdc" stroke="#dcdcdc" stroke-width="0.22">Add</text>
<text transform="translate(616.8,580.4) scale(0.93,1)" font-size="9.2" fill="#dedede" stroke="#dedede" stroke-width="0.22" text-anchor="end">Vector</text>
<path d="M624.8 573.1 L628.9 577.2 L624.8 581.3000000000001 L620.6999999999999 577.2 Z" fill="#6b5fc2" stroke="#181818" stroke-width="0.5"/>
<rect x="530.5" y="591.7" width="87.3" height="14" rx="3" fill="#2b2b2b" stroke="#3a3a3a" stroke-width="0.8"/>
<text transform="translate(536.0,601.9) scale(0.93,1)" font-size="9.2" fill="#dedede" stroke="#dedede" stroke-width="0.22">Add</text>
<path d="M610.4 598.0 L612.8 600.4 L615.2 598.0" fill="none" stroke="#cfcfcf" stroke-width="1.0"/>
<text transform="translate(531.5,617.6) scale(0.93,1)" font-size="9.2" fill="#dedede" stroke="#dedede" stroke-width="0.22">Vector</text>
<path d="M523.5 610.3 L527.6 614.4 L523.5 618.5 L519.4 614.4 Z" fill="#6b5fc2" stroke="#181818" stroke-width="0.5"/>
<text transform="translate(531.5,633.5) scale(0.93,1)" font-size="9.2" fill="#dedede" stroke="#dedede" stroke-width="0.22">Vector</text>
<path d="M523.5 626.1999999999999 L527.6 630.3 L523.5 634.4 L519.4 630.3 Z" fill="#6b5fc2" stroke="#181818" stroke-width="0.5"/><path d="M523.5 628.4 L525.4 630.3 L523.5 632.1999999999999 L521.6 630.3 Z" fill="#2a2a2a"/>
<rect x="366.2" y="640.3" width="102.8" height="87.70000000000005" rx="5" fill="#000" opacity="0.35"/>
<rect x="367.2" y="640.3" width="100.8" height="85.70000000000005" rx="4" fill="#2f2f2f"/>
<path d="M367.2 654.5999999999999 L367.2 644.3 Q367.2 640.3 371.2 640.3 L464.0 640.3 Q468.0 640.3 468.0 644.3 L468.0 654.5999999999999 Z" fill="#476283"/>
<path d="M374.2 645.5 L377.7 649.3 L381.2 645.5" fill="none" stroke="#d8d8d8" stroke-width="1.05"/>
<text transform="translate(385.2,649.8) scale(0.93,1)" font-size="8.9" fill="#dcdcdc" stroke="#dcdcdc" stroke-width="0.22">Separate XYZ</text>
<text transform="translate(460.0,668.4) scale(0.93,1)" font-size="9.2" fill="#dedede" stroke="#dedede" stroke-width="0.22" text-anchor="end">X</text>
<path d="M468.0 661.1 L472.1 665.2 L468.0 669.3000000000001 L463.9 665.2 Z" fill="#a3a3a3" stroke="#181818" stroke-width="0.5"/>
<text transform="translate(460.0,684.4) scale(0.93,1)" font-size="9.2" fill="#dedede" stroke="#dedede" stroke-width="0.22" text-anchor="end">Y</text>
<path d="M468.0 677.1 L472.1 681.2 L468.0 685.3000000000001 L463.9 681.2 Z" fill="#a3a3a3" stroke="#181818" stroke-width="0.5"/>
<text transform="translate(460.0,700.3) scale(0.93,1)" font-size="9.2" fill="#dedede" stroke="#dedede" stroke-width="0.22" text-anchor="end">Z</text>
<path d="M468.0 693.0 L472.1 697.1 L468.0 701.2 L463.9 697.1 Z" fill="#a3a3a3" stroke="#181818" stroke-width="0.5"/>
<text transform="translate(375.2,718.5) scale(0.93,1)" font-size="9.2" fill="#dedede" stroke="#dedede" stroke-width="0.22">Vector</text>
<path d="M367.2 711.1999999999999 L371.3 715.3 L367.2 719.4 L363.09999999999997 715.3 Z" fill="#6b5fc2" stroke="#181818" stroke-width="0.5"/>
<rect x="522.5" y="705" width="103.4" height="108.39999999999998" rx="5" fill="#000" opacity="0.35"/>
<rect x="523.5" y="705" width="101.4" height="106.39999999999998" rx="4" fill="#2f2f2f"/>
<path d="M523.5 719.3 L523.5 709 Q523.5 705 527.5 705 L620.9 705 Q624.9 705 624.9 709 L624.9 719.3 Z" fill="#476283"/>
<path d="M530.5 710.2 L534.0 714.0 L537.5 710.2" fill="none" stroke="#d8d8d8" stroke-width="1.05"/>
<text transform="translate(541.5,714.5) scale(0.93,1)" font-size="8.9" fill="#dcdcdc" stroke="#dcdcdc" stroke-width="0.22">Subtract</text>
<text transform="translate(616.9,732.9) scale(0.93,1)" font-size="9.2" fill="#dedede" stroke="#dedede" stroke-width="0.22" text-anchor="end">Value</text>
<path d="M624.9 725.6 L629.0 729.7 L624.9 733.8000000000001 L620.8 729.7 Z" fill="#a3a3a3" stroke="#181818" stroke-width="0.5"/>
<rect x="530.5" y="743" width="87.4" height="14" rx="3" fill="#2b2b2b" stroke="#3a3a3a" stroke-width="0.8"/>
<text transform="translate(536.0,753.2) scale(0.93,1)" font-size="9.2" fill="#dedede" stroke="#dedede" stroke-width="0.22">Subtract</text>
<path d="M610.5 749.3 L612.9 751.7 L615.3 749.3" fill="none" stroke="#cfcfcf" stroke-width="1.0"/>
<rect x="531.5" y="763.0" width="9" height="9" rx="1.5" fill="#242424"/>
<text transform="translate(543.0,770.7) scale(0.93,1)" font-size="9.2" fill="#dedede" stroke="#dedede" stroke-width="0.22">Clamp</text>
<text transform="translate(531.5,787.1) scale(0.93,1)" font-size="9.2" fill="#dedede" stroke="#dedede" stroke-width="0.22">Value</text>
<path d="M523.5 779.8 L527.6 783.9 L523.5 788.0 L519.4 783.9 Z" fill="#a3a3a3" stroke="#181818" stroke-width="0.5"/>
<rect x="531.5" y="793.7" width="85.4" height="12" rx="3" fill="#222222"/>
<text transform="translate(542.0,802.9) scale(0.93,1)" font-size="9.2" fill="#dedede" stroke="#dedede" stroke-width="0.22">Value</text>
<text transform="translate(606.9,802.9) scale(0.93,1)" font-size="9.2" fill="#dedede" stroke="#dedede" stroke-width="0.22" text-anchor="end">0.500</text>
<path d="M523.5 795.6 L527.6 799.7 L523.5 803.8000000000001 L519.4 799.7 Z" fill="#a3a3a3" stroke="#181818" stroke-width="0.5"/><path d="M523.5 797.8000000000001 L525.4 799.7 L523.5 801.6 L521.6 799.7 Z" fill="#2a2a2a"/>
<rect x="669.8" y="705" width="102.8" height="92" rx="5" fill="#000" opacity="0.35"/>
<rect x="670.8" y="705" width="100.8" height="90" rx="4" fill="#2f2f2f"/>
<path d="M670.8 719.3 L670.8 709 Q670.8 705 674.8 705 L767.5999999999999 705 Q771.5999999999999 705 771.5999999999999 709 L771.5999999999999 719.3 Z" fill="#476283"/>
<path d="M677.8 710.2 L681.3 714.0 L684.8 710.2" fill="none" stroke="#d8d8d8" stroke-width="1.05"/>
<text transform="translate(688.8,714.5) scale(0.93,1)" font-size="8.9" fill="#dcdcdc" stroke="#dcdcdc" stroke-width="0.22">Absolute</text>
<text transform="translate(763.6,732.9) scale(0.93,1)" font-size="9.2" fill="#dedede" stroke="#dedede" stroke-width="0.22" text-anchor="end">Value</text>
<path d="M771.5999999999999 725.6 L775.6999999999999 729.7 L771.5999999999999 733.8000000000001 L767.4999999999999 729.7 Z" fill="#a3a3a3" stroke="#181818" stroke-width="0.5"/>
<rect x="677.8" y="743.2" width="86.8" height="14" rx="3" fill="#2b2b2b" stroke="#3a3a3a" stroke-width="0.8"/>
<text transform="translate(683.3,753.4) scale(0.93,1)" font-size="9.2" fill="#dedede" stroke="#dedede" stroke-width="0.22">Absolute</text>
<path d="M757.2 749.5 L759.6 751.9 L762.0 749.5" fill="none" stroke="#cfcfcf" stroke-width="1.0"/>
<rect x="678.8" y="763.3" width="9" height="9" rx="1.5" fill="#242424"/>
<text transform="translate(690.3,771.0) scale(0.93,1)" font-size="9.2" fill="#dedede" stroke="#dedede" stroke-width="0.22">Clamp</text>
<text transform="translate(678.8,787.1) scale(0.93,1)" font-size="9.2" fill="#dedede" stroke="#dedede" stroke-width="0.22">Value</text>
<path d="M670.8 779.8 L674.9 783.9 L670.8 788.0 L666.6999999999999 783.9 Z" fill="#a3a3a3" stroke="#181818" stroke-width="0.5"/>
<rect x="808.2" y="649.5" width="103" height="158.10000000000002" rx="5" fill="#000" opacity="0.35"/>
<rect x="809.2" y="649.5" width="101" height="156.10000000000002" rx="4" fill="#2f2f2f"/>
<path d="M809.2 663.8 L809.2 653.5 Q809.2 649.5 813.2 649.5 L906.2 649.5 Q910.2 649.5 910.2 653.5 L910.2 663.8 Z" fill="#476283"/>
<path d="M816.2 654.7 L819.7 658.5 L823.2 654.7" fill="none" stroke="#d8d8d8" stroke-width="1.05"/>
<text transform="translate(827.2,659.0) scale(0.93,1)" font-size="8.9" fill="#dcdcdc" stroke="#dcdcdc" stroke-width="0.22">Map Range</text>
<text transform="translate(902.2,677.9) scale(0.93,1)" font-size="9.2" fill="#dedede" stroke="#dedede" stroke-width="0.22" text-anchor="end">Result</text>
<path d="M910.2 670.6 L914.3000000000001 674.7 L910.2 678.8000000000001 L906.1 674.7 Z" fill="#a3a3a3" stroke="#181818" stroke-width="0.5"/>
<rect x="816.2" y="689" width="87" height="14" rx="3" fill="#2b2b2b" stroke="#3a3a3a" stroke-width="0.8"/>
<text transform="translate(821.7,699.2) scale(0.93,1)" font-size="9.2" fill="#dedede" stroke="#dedede" stroke-width="0.22">Float</text>
<path d="M895.8 695.3 L898.2 697.7 L900.6 695.3" fill="none" stroke="#cfcfcf" stroke-width="1.0"/>
<rect x="816.2" y="707.4" width="87" height="14" rx="3" fill="#2b2b2b" stroke="#3a3a3a" stroke-width="0.8"/>
<text transform="translate(821.7,717.6) scale(0.93,1)" font-size="9.2" fill="#dedede" stroke="#dedede" stroke-width="0.22">Smooth Step</text>
<path d="M895.8 713.7 L898.2 716.1 L900.6 713.7" fill="none" stroke="#cfcfcf" stroke-width="1.0"/>
<text transform="translate(817.2,733.2) scale(0.93,1)" font-size="9.2" fill="#dedede" stroke="#dedede" stroke-width="0.22">Value</text>
<path d="M809.2 725.9 L813.3000000000001 730 L809.2 734.1 L805.1 730 Z" fill="#a3a3a3" stroke="#181818" stroke-width="0.5"/>
<rect x="817.2" y="740" width="85" height="12" rx="3" fill="#222222"/>
<text transform="translate(827.7,749.2) scale(0.93,1)" font-size="9.2" fill="#dedede" stroke="#dedede" stroke-width="0.22">From Min</text>
<text transform="translate(892.2,749.2) scale(0.93,1)" font-size="9.2" fill="#dedede" stroke="#dedede" stroke-width="0.22" text-anchor="end">0.050</text>
<path d="M809.2 741.9 L813.3000000000001 746 L809.2 750.1 L805.1 746 Z" fill="#a3a3a3" stroke="#181818" stroke-width="0.5"/><path d="M809.2 744.1 L811.1 746 L809.2 747.9 L807.3000000000001 746 Z" fill="#2a2a2a"/>
<rect x="817.2" y="756" width="85" height="12" rx="3" fill="#222222"/>
<text transform="translate(827.7,765.2) scale(0.93,1)" font-size="9.2" fill="#dedede" stroke="#dedede" stroke-width="0.22">From Max</text>
<text transform="translate(892.2,765.2) scale(0.93,1)" font-size="9.2" fill="#dedede" stroke="#dedede" stroke-width="0.22" text-anchor="end">0.300</text>
<path d="M809.2 757.9 L813.3000000000001 762 L809.2 766.1 L805.1 762 Z" fill="#a3a3a3" stroke="#181818" stroke-width="0.5"/><path d="M809.2 760.1 L811.1 762 L809.2 763.9 L807.3000000000001 762 Z" fill="#2a2a2a"/>
<rect x="817.2" y="771.8" width="85" height="12" rx="3" fill="#222222"/>
<text transform="translate(827.7,781.0) scale(0.93,1)" font-size="9.2" fill="#dedede" stroke="#dedede" stroke-width="0.22">To Min</text>
<text transform="translate(892.2,781.0) scale(0.93,1)" font-size="9.2" fill="#dedede" stroke="#dedede" stroke-width="0.22" text-anchor="end">0.000</text>
<path d="M809.2 773.6999999999999 L813.3000000000001 777.8 L809.2 781.9 L805.1 777.8 Z" fill="#a3a3a3" stroke="#181818" stroke-width="0.5"/><path d="M809.2 775.9 L811.1 777.8 L809.2 779.6999999999999 L807.3000000000001 777.8 Z" fill="#2a2a2a"/>
<rect x="817.2" y="787.8" width="85" height="12" rx="3" fill="#222222"/>
<text transform="translate(827.7,797.0) scale(0.93,1)" font-size="9.2" fill="#dedede" stroke="#dedede" stroke-width="0.22">To Max</text>
<text transform="translate(892.2,797.0) scale(0.93,1)" font-size="9.2" fill="#dedede" stroke="#dedede" stroke-width="0.22" text-anchor="end">1.000</text>
<path d="M809.2 789.6999999999999 L813.3000000000001 793.8 L809.2 797.9 L805.1 793.8 Z" fill="#a3a3a3" stroke="#181818" stroke-width="0.5"/><path d="M809.2 791.9 L811.1 793.8 L809.2 795.6999999999999 L807.3000000000001 793.8 Z" fill="#2a2a2a"/>
<rect x="209.6" y="779.3" width="103.3" height="108.70000000000005" rx="5" fill="#000" opacity="0.35"/>
<rect x="210.6" y="779.3" width="101.3" height="106.70000000000005" rx="4" fill="#2f2f2f"/>
<path d="M210.6 793.5999999999999 L210.6 783.3 Q210.6 779.3 214.6 779.3 L307.9 779.3 Q311.9 779.3 311.9 783.3 L311.9 793.5999999999999 Z" fill="#476283"/>
<path d="M217.6 784.5 L221.1 788.3 L224.6 784.5" fill="none" stroke="#d8d8d8" stroke-width="1.05"/>
<text transform="translate(228.6,788.8) scale(0.93,1)" font-size="8.9" fill="#dcdcdc" stroke="#dcdcdc" stroke-width="0.22">Multiply</text>
<text transform="translate(303.9,807.2) scale(0.93,1)" font-size="9.2" fill="#dedede" stroke="#dedede" stroke-width="0.22" text-anchor="end">Value</text>
<path d="M311.9 799.9 L316.0 804 L311.9 808.1 L307.79999999999995 804 Z" fill="#a3a3a3" stroke="#181818" stroke-width="0.5"/><path d="M311.9 802.1 L313.79999999999995 804 L311.9 805.9 L310.0 804 Z" fill="#2a2a2a"/>
<rect x="217.6" y="817" width="87.3" height="14" rx="3" fill="#2b2b2b" stroke="#3a3a3a" stroke-width="0.8"/>
<text transform="translate(223.1,827.2) scale(0.93,1)" font-size="9.2" fill="#dedede" stroke="#dedede" stroke-width="0.22">Multiply</text>
<path d="M297.5 823.3 L299.9 825.7 L302.3 823.3" fill="none" stroke="#cfcfcf" stroke-width="1.0"/>
<rect x="218.6" y="837.2" width="9" height="9" rx="1.5" fill="#242424"/>
<text transform="translate(230.1,844.9) scale(0.93,1)" font-size="9.2" fill="#dedede" stroke="#dedede" stroke-width="0.22">Clamp</text>
<text transform="translate(218.6,860.9) scale(0.93,1)" font-size="9.2" fill="#dedede" stroke="#dedede" stroke-width="0.22">Value</text>
<path d="M210.6 853.6 L214.7 857.7 L210.6 861.8000000000001 L206.5 857.7 Z" fill="#a3a3a3" stroke="#181818" stroke-width="0.5"/><path d="M210.6 855.8000000000001 L212.5 857.7 L210.6 859.6 L208.7 857.7 Z" fill="#2a2a2a"/>
<rect x="218.6" y="867.6" width="85.3" height="12" rx="3" fill="#222222"/>
<text transform="translate(229.1,876.8) scale(0.93,1)" font-size="9.2" fill="#dedede" stroke="#dedede" stroke-width="0.22">Value</text>
<text transform="translate(293.9,876.8) scale(0.93,1)" font-size="9.2" fill="#dedede" stroke="#dedede" stroke-width="0.22" text-anchor="end">0.100</text>
<path d="M210.6 869.5 L214.7 873.6 L210.6 877.7 L206.5 873.6 Z" fill="#a3a3a3" stroke="#181818" stroke-width="0.5"/><path d="M210.6 871.7 L212.5 873.6 L210.6 875.5 L208.7 873.6 Z" fill="#2a2a2a"/>
<rect x="366.4" y="779.3" width="102.4" height="87.5" rx="5" fill="#000" opacity="0.35"/>
<rect x="367.4" y="779.3" width="100.4" height="85.5" rx="4" fill="#2f2f2f"/>
<path d="M367.4 793.5999999999999 L367.4 783.3 Q367.4 779.3 371.4 779.3 L463.79999999999995 779.3 Q467.79999999999995 779.3 467.79999999999995 783.3 L467.79999999999995 793.5999999999999 Z" fill="#476283"/>
<path d="M374.4 784.5 L377.9 788.3 L381.4 784.5" fill="none" stroke="#d8d8d8" stroke-width="1.05"/>
<text transform="translate(385.4,788.8) scale(0.93,1)" font-size="8.9" fill="#dcdcdc" stroke="#dcdcdc" stroke-width="0.22">Combine XYZ</text>
<text transform="translate(459.8,807.2) scale(0.93,1)" font-size="9.2" fill="#dedede" stroke="#dedede" stroke-width="0.22" text-anchor="end">Vector</text>
<path d="M467.79999999999995 799.9 L471.9 804 L467.79999999999995 808.1 L463.69999999999993 804 Z" fill="#6b5fc2" stroke="#181818" stroke-width="0.5"/><path d="M467.79999999999995 802.1 L469.69999999999993 804 L467.79999999999995 805.9 L465.9 804 Z" fill="#2a2a2a"/>
<rect x="375.4" y="815.8" width="84.4" height="12" rx="3" fill="#222222"/>
<text transform="translate(385.9,825.0) scale(0.93,1)" font-size="9.2" fill="#dedede" stroke="#dedede" stroke-width="0.22">X</text>
<text transform="translate(449.8,825.0) scale(0.93,1)" font-size="9.2" fill="#dedede" stroke="#dedede" stroke-width="0.22" text-anchor="end">0.000</text>
<path d="M367.4 817.6999999999999 L371.5 821.8 L367.4 825.9 L363.29999999999995 821.8 Z" fill="#a3a3a3" stroke="#181818" stroke-width="0.5"/><path d="M367.4 819.9 L369.29999999999995 821.8 L367.4 823.6999999999999 L365.5 821.8 Z" fill="#2a2a2a"/>
<text transform="translate(375.4,841.7) scale(0.93,1)" font-size="9.2" fill="#dedede" stroke="#dedede" stroke-width="0.22">Y</text>
<path d="M367.4 834.4 L371.5 838.5 L367.4 842.6 L363.29999999999995 838.5 Z" fill="#a3a3a3" stroke="#181818" stroke-width="0.5"/><path d="M367.4 836.6 L369.29999999999995 838.5 L367.4 840.4 L365.5 838.5 Z" fill="#2a2a2a"/>
<rect x="375.4" y="848.5" width="84.4" height="12" rx="3" fill="#222222"/>
<text transform="translate(385.9,857.7) scale(0.93,1)" font-size="9.2" fill="#dedede" stroke="#dedede" stroke-width="0.22">Z</text>
<text transform="translate(449.8,857.7) scale(0.93,1)" font-size="9.2" fill="#dedede" stroke="#dedede" stroke-width="0.22" text-anchor="end">0.000</text>
<path d="M367.4 850.4 L371.5 854.5 L367.4 858.6 L363.29999999999995 854.5 Z" fill="#a3a3a3" stroke="#181818" stroke-width="0.5"/><path d="M367.4 852.6 L369.29999999999995 854.5 L367.4 856.4 L365.5 854.5 Z" fill="#2a2a2a"/>
<rect x="71" y="833.2" width="103.7" height="53.59999999999991" rx="5" fill="#000" opacity="0.35"/>
<rect x="72" y="833.2" width="101.7" height="51.59999999999991" rx="4" fill="#2f2f2f"/>
<path d="M72 847.5 L72 837.2 Q72 833.2 76 833.2 L169.7 833.2 Q173.7 833.2 173.7 837.2 L173.7 847.5 Z" fill="#7a3848"/>
<path d="M79.0 838.4 L82.5 842.2 L86.0 838.4" fill="none" stroke="#d8d8d8" stroke-width="1.05"/>
<text transform="translate(90.0,842.7) scale(0.93,1)" font-size="8.9" fill="#dcdcdc" stroke="#dcdcdc" stroke-width="0.22">Scene Time</text>
<text transform="translate(165.7,860.9) scale(0.93,1)" font-size="9.2" fill="#dedede" stroke="#dedede" stroke-width="0.22" text-anchor="end">Seconds</text>
<circle cx="173.7" cy="857.7" r="3.4" fill="#a3a3a3" stroke="#181818" stroke-width="0.6"/>
<text transform="translate(165.7,877.3) scale(0.93,1)" font-size="9.2" fill="#dedede" stroke="#dedede" stroke-width="0.22" text-anchor="end">Frame</text>
<circle cx="173.7" cy="874.1" r="3.4" fill="#a3a3a3" stroke="#181818" stroke-width="0.6"/>
<path d="M940 422 L940 436 L943.5 432.5 L946 438 L948 437 L945.5 431.5 L950 431.5 Z" fill="#111" stroke="#e8e8e8" stroke-width="1"/>
</g>
<path d="M1495.5 358 L1524 358 L1524 957 L1495.5 957 Z" fill="#1f1f1f"/>
<rect x="1504" y="360" width="26" height="19.5" rx="5" fill="#2b2b2b"/>
<g fill="#e6e6e6"><rect x="1508" y="363" width="14" height="6" rx="3"/><rect x="1508" y="371" width="14" height="6" rx="3"/></g><g fill="#2b2b2b"><rect x="1516" y="364.3" width="4.5" height="3.4" rx="1"/><rect x="1516" y="372.3" width="4.5" height="3.4" rx="1"/></g>
<path d="M1506 400 L1506 407" stroke="#d0d0d0" stroke-width="1"/><circle cx="1506" cy="409.2" r="2.4" fill="#d0d0d0"/><path d="M1512 399.5 L1512 402.5 Q1514 405.5 1516 402.5 L1516 399.5 M1514 404.5 L1514 412" stroke="#d0d0d0" stroke-width="1.6" fill="none"/>
<g fill="none" stroke="#d0d0d0" stroke-width="1"><rect x="1505" y="438.0" width="12" height="8"/><path d="M1507 438.0 L1508 436.0 L1512 436.0 L1513 438.0 M1506.5 441.5 L1513 441.5 M1506.5 444.0 L1513 444.0"/></g>
<rect x="1505" y="463.5" width="12" height="4" fill="#d0d0d0"/><rect x="1507" y="467.5" width="8" height="8" fill="#9a9a9a"/><path d="M1508 474.5 L1511 470.5 L1514 474.5 Z" fill="#3a3a3a"/>
<g fill="none" stroke="#d0d0d0" stroke-width="1"><rect x="1508" y="491.5" width="9" height="8"/><path d="M1506 493.5 L1506 501.5 L1515 501.5 M1504 495.5 L1504 503.5 L1513 503.5"/></g>
<path d="M1508 519.5 Q1503 527.5 1506 529.5 L1509 525.5 Z" fill="#d0d0d0"/><circle cx="1512.5" cy="527.5" r="3.5" fill="none" stroke="#d0d0d0" stroke-width="1"/><circle cx="1514" cy="520.5" r="1.6" fill="#d0d0d0"/>
<circle cx="1511" cy="553.5" r="5.5" fill="none" stroke="#b85a5a" stroke-width="1"/><path d="M1506 551.5 Q1511 552.5 1513 548.5 M1508 557.5 Q1512 554.5 1516 555.5" fill="none" stroke="#b85a5a" stroke-width="1"/>
<g fill="none" stroke="#d0d0d0" stroke-width="1"><rect x="1505" y="584.5" width="12" height="3"/><path d="M1506 587.5 L1506 594.5 L1516 594.5 L1516 587.5 M1509 590.5 L1513 590.5"/></g>
<g fill="none" stroke="#a08c70" stroke-width="1.1"><path d="M1505 622.5 L1505 619.5 L1508 619.5 M1514 619.5 L1517 619.5 L1517 622.5 M1505 628.5 L1505 631.5 L1508 631.5 M1514 631.5 L1517 631.5 L1517 628.5"/></g><rect x="1507.5" y="622.0" width="7" height="7" fill="#b8935c"/>
<path d="M1516 648.5 Q1512 646.5 1511 651.5 L1505 657.5 L1507 659.5 L1513 653.5 Q1518 652.5 1517 649.5 L1514 651.5 L1513 650.5 Z" fill="#7f8fe0"/>
<g stroke="#7f8fe0" stroke-width="1.1"><path d="M1506 677.0 L1516.5 677.0 M1506 677.0 L1506 686.5 M1506 677.0 L1516 686.5"/></g><g fill="#7f8fe0"><circle cx="1506" cy="677.0" r="2.6"/><circle cx="1516.5" cy="677.0" r="1.3"/><circle cx="1506" cy="686.5" r="1.4"/><circle cx="1516" cy="686.5" r="2"/></g>
<circle cx="1511" cy="709.5" r="5.5" fill="none" stroke="#7f8fe0" stroke-width="1.1"/><circle cx="1512" cy="708.5" r="2.3" fill="#7f8fe0"/>
<path d="M1506 741.5 L1515 732.5" stroke="#7f8fe0" stroke-width="4" stroke-linecap="round"/><circle cx="1508" cy="739.5" r="1.4" fill="#1f1f1f"/><circle cx="1513.5" cy="734.5" r="1.4" fill="#1f1f1f"/>
<path d="M1505 760.5 L1517 760.5 L1511 770.5 Z" fill="none" stroke="#5ec48a" stroke-width="1"/><g fill="#5ec48a"><rect x="1503.5" y="759.0" width="3" height="3"/><rect x="1515.5" y="759.0" width="3" height="3"/><rect x="1509.5" y="769.0" width="3" height="3"/></g>
<circle cx="1511" cy="793.5" r="6" fill="#c07070"/><path d="M1511 787.5 A6 6 0 0 1 1517 793.5 L1511 793.5 Z M1511 793.5 L1505 793.5 A6 6 0 0 0 1511 799.5 Z" fill="#2a2a2a"/>
<path d="M57 960 L1524 960 L1524 998 Q1524 1008 1514 1008 L67 1008 Q57 1008 57 998 Z" fill="#1a1a1a"/>
<rect x="57" y="960" width="1467" height="25.8" fill="#1f1f1f"/>
<rect x="57" y="985.8" width="1467" height="1.2" fill="#171717"/>
<rect x="64.5" y="963.5" width="31" height="18.7" rx="4" fill="#2a2a2a" stroke="#353535" stroke-width="1"/>
<circle cx="76" cy="972.8" r="5.8" fill="#e8e8e8"/><path d="M77.5 969.5 L75 972.8 L77.5 976" fill="none" stroke="#2b2b2b" stroke-width="1.4"/>
<path d="M86.9 972.0 L89.5 974.6 L92.1 972.0" fill="none" stroke="#cfcfcf" stroke-width="1.1"/>
<rect x="102" y="963.5" width="131.5" height="18.7" rx="4" fill="#2a2a2a" stroke="#353535" stroke-width="1"/>
<path d="M172.6 963 L172.6 982.7" stroke="#242424" stroke-width="1"/>
<text x="109.0" y="976.9" font-size="11.5" fill="#e0e0e0" textLength="46.8" lengthAdjust="spacingAndGlyphs">Playback</text>
<path d="M163.4 972.0 L166.0 974.6 L168.6 972.0" fill="none" stroke="#cfcfcf" stroke-width="1.1"/>
<text x="180.5" y="976.9" font-size="11.5" fill="#e0e0e0" textLength="36" lengthAdjust="spacingAndGlyphs">Keying</text>
<path d="M224.9 972.0 L227.5 974.6 L230.1 972.0" fill="none" stroke="#cfcfcf" stroke-width="1.1"/>
<text x="243.0" y="976.9" font-size="11.5" fill="#e0e0e0" textLength="26" lengthAdjust="spacingAndGlyphs">View</text>
<text x="284.0" y="976.9" font-size="11.5" fill="#e0e0e0" textLength="36" lengthAdjust="spacingAndGlyphs">Marker</text>
<rect x="681" y="964" width="39" height="18" rx="4" fill="#262626"/>
<circle cx="690.5" cy="973" r="4.3" fill="none" stroke="#c0c0c0" stroke-width="1"/>
<path d="M707.1 972.3 L709.5 974.7 L711.9 972.3" fill="none" stroke="#6a6a6a" stroke-width="1.1"/>
<rect x="726.8" y="964" width="118.5" height="18" rx="4" fill="#2b2b2b"/>
<g fill="#e6e6e6"><rect x="731.5" y="968" width="1.6" height="10"/><path d="M741 968 L733.5 973 L741 978 Z"/><path d="M748 973 L752 968.5 L756 973 L752 977.5 Z"/><path d="M763 968 L757 973 L763 978 Z"/><path d="M782 967.5 L773 973 L782 978.5 Z"/><path d="M791 967.5 L800 973 L791 978.5 Z"/><path d="M809 968 L815 973 L809 978 Z"/><path d="M818 973 L822 968.5 L826 973 L822 977.5 Z"/><path d="M832 968 L839.5 973 L832 978 Z"/><rect x="840" y="968" width="1.6" height="10"/></g>
<rect x="1209.5" y="964.5" width="73" height="17.5" rx="4" fill="#1e1e1e" stroke="#333" stroke-width="1"/>
<text x="1245.5" y="977.1" font-size="11.5" fill="#e4e4e4" text-anchor="middle" textLength="19" lengthAdjust="spacingAndGlyphs">200</text>
<rect x="1289.5" y="964.5" width="193.5" height="17.5" rx="4" fill="#1e1e1e" stroke="#333" stroke-width="1"/><rect x="1290" y="965" width="18" height="16.5" rx="3" fill="#2a2a2a"/>
<circle cx="1298.5" cy="974" r="5" fill="none" stroke="#d0d0d0" stroke-width="1.1"/><path d="M1298.5 974 L1298.5 971 M1296.5 967 L1300.5 967 M1303 968.5 L1304.5 967" stroke="#d0d0d0" stroke-width="1.1" fill="none"/>
<path d="M1308 964 L1308 982 M1397 964 L1397 982" stroke="#1e1e1e" stroke-width="1"/>
<text x="1324.0" y="977.1" font-size="11.5" fill="#e0e0e0" textLength="25" lengthAdjust="spacingAndGlyphs">Start</text>
<text x="1380.5" y="977.1" font-size="11.5" fill="#e0e0e0" text-anchor="middle">1</text>
<text x="1413.0" y="977.1" font-size="11.5" fill="#e0e0e0" textLength="20.5" lengthAdjust="spacingAndGlyphs">End</text>
<text x="1449.0" y="977.1" font-size="11.5" fill="#e0e0e0" textLength="21" lengthAdjust="spacingAndGlyphs">250</text>
<rect x="66" y="990.5" width="11.5" height="15" rx="2.5" fill="none" stroke="#c8c8c8" stroke-width="1"/><path d="M67 992 L71.5 992 L71.5 998 L67 998 Z" fill="#9a9a9a"/>
<text x="80.0" y="1002.1" font-size="11.5" fill="#ababab" textLength="72" lengthAdjust="spacingAndGlyphs">Select Toggle</text>
<text x="1486.0" y="1002.0" font-size="11" fill="#8a8a8a" textLength="25.5" lengthAdjust="spacingAndGlyphs">4.5.6</text>
</g>
<rect x="56.5" y="38.5" width="1468" height="970" rx="11" fill="none" stroke="#585858" stroke-width="1"/>
</svg></body></html>
